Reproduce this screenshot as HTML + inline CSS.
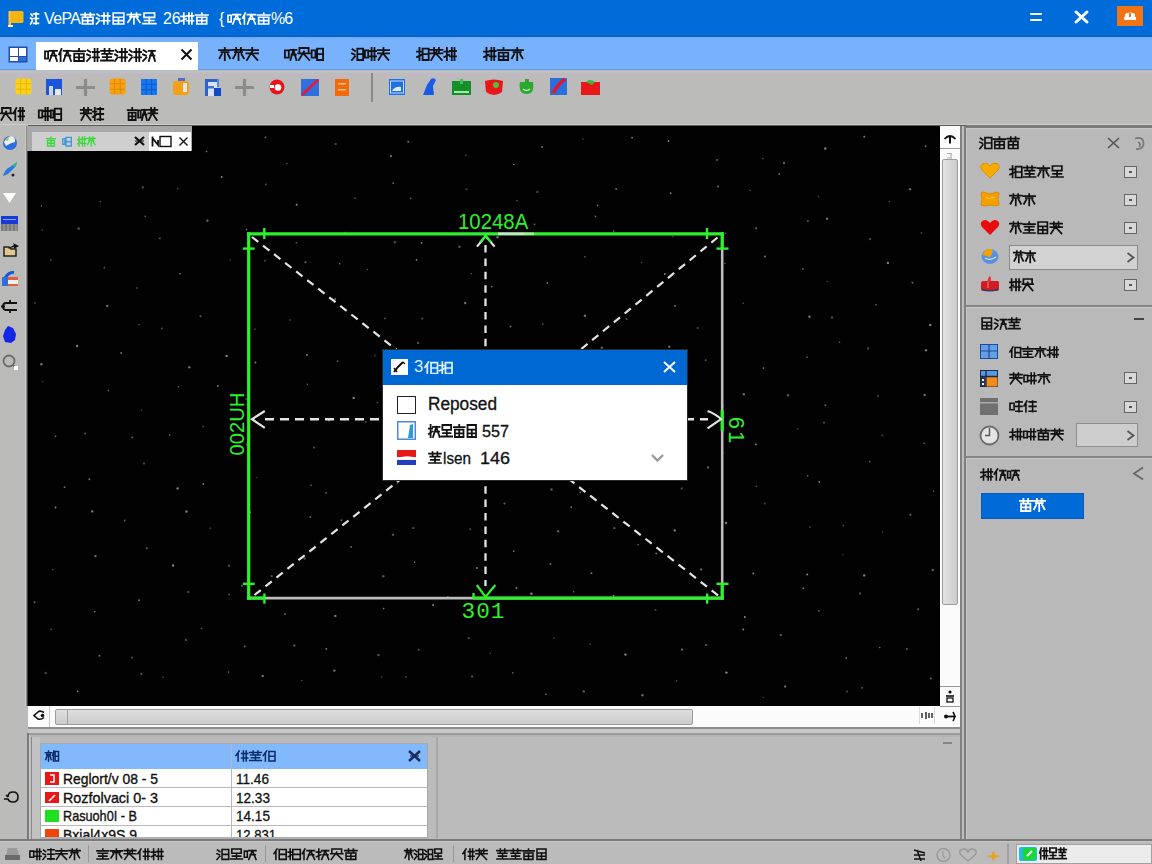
<!DOCTYPE html>
<html><head><meta charset="utf-8"><title>CAD</title>
<style>
*{margin:0;padding:0;box-sizing:border-box}
html,body{width:1152px;height:864px;overflow:hidden;background:#bbbbbb;font-family:"Liberation Sans",sans-serif}
.a{position:absolute}
.cj{display:flex;line-height:1;white-space:nowrap;font-family:"Liberation Sans",sans-serif}
.cj b{display:block;position:relative;height:100%;font-weight:inherit}
.cj i{position:absolute;left:0;right:0;top:0;text-align:center;font-style:normal}
.tx{white-space:nowrap}
</style></head><body>
<div class="a" style="left:0px;top:0px;width:1152px;height:37px;background:#006cd9"></div>
<div class="a" style="left:0px;top:35px;width:1152px;height:1px;background:#0a66c8"></div>
<div class="a" style="left:0px;top:36px;width:1152px;height:1px;background:#0a5cb8"></div>
<svg class="a" style="left:7px;top:9px;" width="18" height="20" viewBox="0 0 18 20"><rect x="1.5" y="2" width="2.5" height="16" fill="#f4c35a"/><rect x="1" y="16" width="5" height="2" fill="#fff"/><rect x="3.5" y="2" width="13" height="12" rx="1.5" fill="#f6b40c"/></svg>
<svg class="a" style="left:29.0px;top:12.0px" width="11.0" height="13.0"><path d="M2.0 2.1L3.3 3.8M1.6 6.0L3.0 7.1M1.6 12.0L3.3 8.7M4.6 1.9H9.4M4.6 6.5H9.4M4.6 11.4H9.4M7.0 1.0V12.0" stroke="#fff" stroke-width="1.65" fill="none" stroke-linecap="square"/></svg>
<div class="a tx" style="left:44px;top:10.77px;font-size:15.94px;line-height:15.94px;color:#fff;font-family:'Liberation Sans',sans-serif;letter-spacing:-0.6px">VePA</div>
<svg class="a" style="left:79.0px;top:12.0px" width="79.0" height="13.0"><path d="M2.1 2.6H15.3M6.1 1.0V4.3M11.3 1.0V4.3M3.4 5.2H14.0V12.0H3.4ZM3.4 8.6H14.0M8.7 5.2V12.0M18.1 2.1L20.3 3.8M17.5 6.0L19.9 7.1M17.5 12.0L20.3 8.7M22.5 3.8H30.7M25.0 1.0V12.0M28.7 1.0V12.0M22.5 8.7H30.7M34.2 4.3V1.0H44.8V4.3M34.2 5.2H44.8V12.0H34.2ZM34.2 8.6H44.8M39.5 5.2V12.0M48.3 2.6H61.5M52.3 1.0V4.3M57.5 1.0V4.3M54.9 4.8V12.0M51.6 6.5L48.9 10.3M58.2 6.5L60.9 10.3M50.9 4.8H58.9M65.0 4.3V1.0H75.6V4.3M65.0 5.4H75.6M65.7 8.5H74.9M63.7 11.6H76.9M70.3 5.4V11.6" stroke="#fff" stroke-width="1.65" fill="none" stroke-linecap="square"/></svg>
<div class="a tx" style="left:163px;top:10.77px;font-size:15.94px;line-height:15.94px;color:#fff;font-family:'Liberation Sans',sans-serif;">26</div>
<svg class="a" style="left:179.0px;top:12.0px" width="31.0" height="13.0"><path d="M2.0 4.3H7.0M4.8 1.0V12.0M2.0 9.2L7.0 7.1M8.0 3.8H14.5M9.9 1.0V12.0M12.9 1.0V12.0M8.0 8.7H14.5M22.8 1.0V2.6M16.5 3.0H29.0M17.8 5.2H27.7V12.0H17.8ZM17.8 8.6H27.7M22.8 5.2V12.0" stroke="#fff" stroke-width="1.65" fill="none" stroke-linecap="square"/></svg>
<div class="a tx" style="left:219px;top:10.77px;font-size:15.94px;line-height:15.94px;color:#fff;font-family:'Liberation Sans',sans-serif;">{</div>
<svg class="a" style="left:226.0px;top:12.0px" width="46.0" height="13.0"><path d="M2.0 3.2h3.2v6.6h-3.2zM6.8 2.6H14.6M10.7 2.6L6.8 12.0M10.7 2.6L14.6 12.0M8.4 7.1H13.9M19.3 1.0L16.7 6.0M18.4 3.8V12.0M21.5 2.6H29.3M25.4 2.6L21.5 12.0M25.4 2.6L29.3 12.0M23.1 7.1H28.5M37.7 1.0V2.6M31.4 3.0H44.0M32.6 5.2H42.7V12.0H32.6ZM32.6 8.6H42.7M37.7 5.2V12.0" stroke="#fff" stroke-width="1.65" fill="none" stroke-linecap="square"/></svg>
<div class="a tx" style="left:271px;top:10.77px;font-size:15.94px;line-height:15.94px;color:#fff;font-family:'Liberation Sans',sans-serif;letter-spacing:-1px">%6</div>
<div class="a" style="left:1030px;top:13px;width:12px;height:2px;background:#fff;border-radius:1px"></div>
<div class="a" style="left:1030px;top:19px;width:12px;height:2px;background:#fff;border-radius:1px"></div>
<svg class="a" style="left:1073px;top:9px;" width="17" height="16" viewBox="0 0 17 16"><path d="M3 3 L14 13 M14 3 L3 13" stroke="#fff" stroke-width="3" stroke-linecap="round"/></svg>
<div class="a" style="left:1117px;top:6px;width:26px;height:20px;background:#f27314"></div>
<svg class="a" style="left:1122px;top:10px;" width="16" height="12" viewBox="0 0 16 12"><path d="M3 4 Q8 1 13 4 L13 7 L3 7 Z" fill="#fff"/><rect x="2" y="7" width="12" height="3" fill="#fff"/><rect x="7" y="3" width="2" height="4" fill="#f27314"/></svg>
<div class="a" style="left:0px;top:37px;width:1152px;height:33px;background:#78b1fc"></div>
<div class="a" style="left:0px;top:37px;width:1152px;height:2px;background:#6eaefa"></div>
<div class="a" style="left:0px;top:69px;width:1152px;height:2px;background:#6a9ad8"></div>
<svg class="a" style="left:8px;top:46px;" width="20" height="17" viewBox="0 0 20 17"><rect x="0.5" y="0.5" width="19" height="16" fill="#1f4fa8"/><rect x="2" y="2" width="8" height="8" fill="#fff"/><rect x="11" y="2" width="7" height="8" fill="#fff"/><rect x="2" y="11" width="8" height="4" fill="#fff"/><rect x="11" y="11" width="7" height="4" fill="#2f6fd8"/></svg>
<div class="a" style="left:36px;top:42px;width:162px;height:28px;background:#fff"></div>
<svg class="a" style="left:43.0px;top:48.0px" width="114.0" height="14.0"><path d="M2.0 3.4h3.1v7.2h-3.1zM6.6 2.8H14.0M10.3 2.8L6.6 13.0M10.3 2.8L14.0 13.0M8.0 7.6H13.3M18.5 1.0L16.0 6.4M17.6 4.0V13.0M20.6 2.8H28.0M24.3 2.8L20.6 13.0M24.3 2.8L28.0 13.0M22.0 7.6H27.3M36.0 1.0V2.8M30.0 3.2H42.0M31.2 5.6H40.8V13.0H31.2ZM31.2 9.3H40.8M36.0 5.6V13.0M44.6 2.2L47.4 4.0M44.0 6.4L46.9 7.6M44.0 13.0L47.4 9.4M49.8 4.0H56.0M51.6 1.0V13.0M54.5 1.0V13.0M49.8 9.4H56.0M58.0 2.8H70.0M61.6 1.0V4.6M66.4 1.0V4.6M59.2 5.8H68.8M59.8 9.2H68.2M58.0 12.5H70.0M64.0 5.8V12.5M72.6 2.2L74.5 4.0M72.0 6.4L74.1 7.6M72.0 13.0L74.5 9.4M76.6 4.0H84.0M78.8 1.0V13.0M82.2 1.0V13.0M76.6 9.4H84.0M86.6 2.2L88.9 4.0M86.0 6.4L88.5 7.6M86.0 13.0L88.9 9.4M91.2 4.0H98.0M93.2 1.0V13.0M96.3 1.0V13.0M91.2 9.4H98.0M100.6 2.2L103.4 4.0M100.0 6.4L102.9 7.6M100.0 13.0L103.4 9.4M105.8 2.8H112.0M108.9 2.8L105.8 13.0M108.9 2.8L112.0 13.0M107.0 7.6H111.4" stroke="#111" stroke-width="1.7999999999999998" fill="none" stroke-linecap="square"/></svg>
<svg class="a" style="left:180px;top:48px;" width="13" height="13" viewBox="0 0 13 13"><path d="M1.5 1.5 L11.5 11.5 M11.5 1.5 L1.5 11.5" stroke="#111" stroke-width="2"/></svg>
<svg class="a" style="left:217.0px;top:47.0px" width="43.0" height="14.0"><path d="M7.8 1.0V2.8M2.0 3.2H13.7M7.8 5.2V13.0M4.9 7.0L2.5 11.2M10.8 7.0L13.1 11.2M4.3 5.2H11.4M15.6 2.8H27.4M19.1 1.0V4.6M23.9 1.0V4.6M21.5 5.2V13.0M18.6 7.0L16.2 11.2M24.4 7.0L26.8 11.2M18.0 5.2H25.0M35.2 1.0V2.8M29.3 3.2H41.0M29.3 6.4H41.0M35.2 4.6L29.9 13.0M35.2 7.0L40.5 13.0" stroke="#111" stroke-width="1.7999999999999998" fill="none" stroke-linecap="square"/></svg>
<svg class="a" style="left:283.0px;top:47.0px" width="42.0" height="14.0"><path d="M1.9 3.4h3.9v7.2h-3.9zM7.4 2.8H13.4M10.4 2.8L7.4 13.0M10.4 2.8L13.4 13.0M8.6 7.6H12.8M16.4 4.6V1.0H25.6V4.6M15.3 6.4H26.7M21.0 4.6L15.8 13.0M21.0 7.0L26.2 13.0M28.6 3.4h3.9v7.2h-3.9zM34.1 1.6H40.1V13.0H34.1ZM34.1 7.2H40.1" stroke="#111" stroke-width="1.7999999999999998" fill="none" stroke-linecap="square"/></svg>
<svg class="a" style="left:350.0px;top:47.0px" width="41.0" height="14.0"><path d="M2.5 2.2L5.0 4.0M1.9 6.4L4.6 7.6M1.9 13.0L5.0 9.4M7.3 1.6H13.1V13.0H7.3ZM7.3 7.2H13.1M14.9 3.4h3.3v7.2h-3.3zM19.7 4.0H26.1M21.6 1.0V13.0M24.5 1.0V13.0M19.7 9.4H26.1M33.5 1.0V2.8M27.9 3.2H39.1M27.9 6.4H39.1M33.5 4.6L28.5 13.0M33.5 7.0L38.5 13.0" stroke="#111" stroke-width="1.7999999999999998" fill="none" stroke-linecap="square"/></svg>
<svg class="a" style="left:415.0px;top:47.0px" width="43.0" height="14.0"><path d="M2.0 4.6H6.7M4.5 1.0V13.0M2.0 10.0L6.7 7.6M7.6 1.6H13.7V13.0H7.6ZM7.6 7.2H13.7M15.6 2.8H27.4M19.1 1.0V4.6M23.9 1.0V4.6M15.6 6.4H27.4M21.5 4.6L16.2 13.0M21.5 7.0L26.8 13.0M29.3 4.6H34.0M31.9 1.0V13.0M29.3 10.0L34.0 7.6M34.9 4.0H41.0M36.8 1.0V13.0M39.5 1.0V13.0M34.9 9.4H41.0" stroke="#111" stroke-width="1.7999999999999998" fill="none" stroke-linecap="square"/></svg>
<svg class="a" style="left:482.0px;top:47.0px" width="43.0" height="14.0"><path d="M2.0 4.6H6.7M4.5 1.0V13.0M2.0 10.0L6.7 7.6M7.6 4.0H13.7M9.4 1.0V13.0M12.2 1.0V13.0M7.6 9.4H13.7M21.5 1.0V2.8M15.6 3.2H27.4M16.8 5.6H26.2V13.0H16.8ZM16.8 9.3H26.2M21.5 5.6V13.0M35.2 1.0V2.8M29.3 3.2H41.0M35.2 5.2V13.0M32.2 7.0L29.9 11.2M38.1 7.0L40.5 11.2M31.6 5.2H38.7" stroke="#111" stroke-width="1.7999999999999998" fill="none" stroke-linecap="square"/></svg>
<div class="a" style="left:0px;top:70px;width:1152px;height:56px;background:#bbbbba"></div>
<div class="a" style="left:0px;top:71px;width:1152px;height:2px;background:#b6c4c8"></div>
<div class="a" style="left:0px;top:73px;width:1152px;height:4px;background:#c1b9bf"></div>
<div class="a" style="left:0px;top:124px;width:1152px;height:1px;background:#cdcdcd"></div>
<div class="a" style="left:28px;top:125px;width:938px;height:1px;background:#5a5a5a"></div>
<div class="a" style="left:371px;top:73px;width:2px;height:29px;background:#8a8a8a"></div>
<svg class="a" style="left:15px;top:78px;" width="17" height="17" viewBox="0 0 17 17"><rect x="0.5" y="0.5" width="16" height="16" rx="3" fill="#f8d21c"/><line x1="5.7" y1="1" x2="5.7" y2="16" stroke="#e8b800" stroke-width="1"/><line x1="11.3" y1="1" x2="11.3" y2="16" stroke="#e8b800" stroke-width="1"/><line x1="1" y1="5.7" x2="16" y2="5.7" stroke="#e8b800" stroke-width="1"/><line x1="1" y1="11.3" x2="16" y2="11.3" stroke="#e8b800" stroke-width="1"/></svg>
<svg class="a" style="left:46px;top:79px;" width="16" height="16" viewBox="0 0 16 16"><rect x="0" y="0" width="16" height="16" fill="#1a55e0"/><rect x="3" y="7" width="4" height="9" fill="#c8d4f0"/><rect x="9" y="10" width="6" height="6" fill="#e8e8e8"/></svg>
<svg class="a" style="left:76px;top:79px;" width="19" height="17" viewBox="0 0 19 17"><path d="M9.5 1 V16 M1 8.5 H18" stroke="#8c8c8c" stroke-width="3.2" stroke-linecap="round"/></svg>
<svg class="a" style="left:109px;top:78px;" width="17" height="17" viewBox="0 0 17 17"><rect x="0.5" y="0.5" width="16" height="16" rx="3" fill="#f7a10c"/><line x1="5.7" y1="1" x2="5.7" y2="16" stroke="#e08a00" stroke-width="1"/><line x1="11.3" y1="1" x2="11.3" y2="16" stroke="#e08a00" stroke-width="1"/><line x1="1" y1="5.7" x2="16" y2="5.7" stroke="#e08a00" stroke-width="1"/><line x1="1" y1="11.3" x2="16" y2="11.3" stroke="#e08a00" stroke-width="1"/></svg>
<svg class="a" style="left:141px;top:79px;" width="16" height="16" viewBox="0 0 16 16"><rect x="0" y="0" width="16" height="16" fill="#1677f0"/><path d="M5.3 0 V16 M10.6 0 V16 M0 5.3 H16 M0 10.6 H16" stroke="#0d5cc8" stroke-width="1"/></svg>
<svg class="a" style="left:173px;top:78px;" width="16" height="17" viewBox="0 0 16 17"><rect x="5" y="0" width="7" height="3" fill="#4a6fd0"/><rect x="0" y="3" width="16" height="14" rx="3" fill="#f5a014"/><rect x="10" y="5" width="4" height="9" fill="#e6e6e6"/></svg>
<svg class="a" style="left:205px;top:79px;" width="16" height="17" viewBox="0 0 16 17"><rect x="0" y="0" width="3" height="17" fill="#2a62d0"/><rect x="0" y="0" width="12" height="3" fill="#2a62d0"/><rect x="3" y="3" width="9" height="14" fill="#d8e2f4"/><rect x="3" y="7" width="6" height="2.5" fill="#3a72e0"/><rect x="12" y="0" width="2" height="8" fill="#5a8ae8"/><rect x="9" y="9" width="7" height="8" fill="#1448c8"/></svg>
<svg class="a" style="left:235px;top:79px;" width="19" height="17" viewBox="0 0 19 17"><path d="M9.5 1 V16 M1 8.5 H18" stroke="#8c8c8c" stroke-width="3.2" stroke-linecap="round"/></svg>
<svg class="a" style="left:268px;top:79px;" width="18" height="16" viewBox="0 0 18 16"><circle cx="9" cy="8" r="7.5" fill="#e8141a"/><circle cx="10" cy="8.5" r="3.3" fill="#fff"/><rect x="2" y="6" width="4" height="3" fill="#fff"/></svg>
<svg class="a" style="left:301px;top:79px;" width="18" height="17" viewBox="0 0 18 17"><rect x="0" y="0" width="18" height="17" fill="#2f6fe0"/><path d="M1 16 L17 1" stroke="#d8203a" stroke-width="3"/></svg>
<svg class="a" style="left:335px;top:79px;" width="14" height="17" viewBox="0 0 14 17"><rect x="0" y="0" width="14" height="17" fill="#f26a0a"/><rect x="3" y="4" width="8" height="1.5" fill="#f8c090"/><rect x="3" y="10" width="8" height="1.5" fill="#f8c090"/></svg>
<svg class="a" style="left:389px;top:79px;" width="16" height="16" viewBox="0 0 16 16"><rect x="0" y="0" width="16" height="16" fill="#1f6fe8"/><rect x="1.5" y="2" width="13" height="12" fill="none" stroke="#c8dcf8" stroke-width="1"/><path d="M3 12 Q6 7 12 8 V12 Z" fill="#e0ecff"/></svg>
<svg class="a" style="left:422px;top:77px;" width="15" height="18" viewBox="0 0 15 18"><path d="M1 18 L5 8 L9 2 Q12 0 14 3 L11 9 L12 18 Z" fill="#1a5ae8"/></svg>
<svg class="a" style="left:452px;top:79px;" width="19" height="16" viewBox="0 0 19 16"><rect x="0" y="2" width="19" height="14" fill="#13902a"/><rect x="2" y="12" width="15" height="2" fill="#a8e8a8"/><rect x="8" y="0" width="3" height="5" fill="#40c050"/></svg>
<svg class="a" style="left:485px;top:79px;" width="18" height="17" viewBox="0 0 18 17"><path d="M0 2 Q9 -1 18 2 L17 13 Q9 19 1 13 Z" fill="#e81818"/><circle cx="11" cy="6" r="3" fill="#50c040"/></svg>
<svg class="a" style="left:518px;top:78px;" width="17" height="17" viewBox="0 0 17 17"><path d="M2 4 Q0 16 8.5 16 Q17 16 15 4 L11 4 L11 1 L7 1 L7 4 Z" fill="#2aa830"/><path d="M5 11 Q8.5 14 12 11" stroke="#b8f0b8" stroke-width="1.6" fill="none"/></svg>
<svg class="a" style="left:550px;top:78px;" width="17" height="17" viewBox="0 0 17 17"><rect x="0" y="0" width="17" height="17" fill="#2a6fe0"/><path d="M3 15 Q8 6 15 1" stroke="#e01a2a" stroke-width="3.5" fill="none"/></svg>
<svg class="a" style="left:581px;top:79px;" width="19" height="16" viewBox="0 0 19 16"><rect x="0" y="3" width="19" height="13" fill="#e81818"/><path d="M5 3 Q9 -1 14 3 L11 6 Z" fill="#3ab83a"/></svg>
<svg class="a" style="left:-1.0px;top:107.0px" width="27.0" height="14.0"><path d="M3.0 4.6V1.0H11.6V4.6M1.9 6.4H12.6M7.2 4.6L2.4 13.0M7.2 7.0L12.1 13.0M17.4 1.0L14.4 6.4M16.3 4.0V13.0M19.5 4.0H25.1M21.2 1.0V13.0M23.7 1.0V13.0M19.5 9.4H25.1" stroke="#111" stroke-width="1.7999999999999998" fill="none" stroke-linecap="square"/></svg>
<svg class="a" style="left:37.0px;top:107.0px" width="26.0" height="14.0"><path d="M1.8 3.4h3.5v7.2h-3.5zM6.8 4.0H12.2M8.4 1.0V13.0M10.8 1.0V13.0M6.8 9.4H12.2M13.8 3.4h2.6v7.2h-2.6zM17.8 1.6H24.2V13.0H17.8ZM17.8 7.2H24.2" stroke="#111" stroke-width="1.7999999999999998" fill="none" stroke-linecap="square"/></svg>
<svg class="a" style="left:79.0px;top:107.0px" width="26.0" height="14.0"><path d="M1.8 2.8H12.2M4.9 1.0V4.6M9.1 1.0V4.6M1.8 6.4H12.2M7.0 4.6L2.4 13.0M7.0 7.0L11.6 13.0M13.8 4.6H17.5M15.8 1.0V13.0M13.8 10.0L17.5 7.6M18.3 2.0H24.2M18.3 7.0H24.2M18.3 12.4H24.2M21.2 1.0V13.0" stroke="#111" stroke-width="1.7999999999999998" fill="none" stroke-linecap="square"/></svg>
<svg class="a" style="left:126.0px;top:107.0px" width="33.0" height="14.0"><path d="M6.2 1.0V2.8M1.7 3.2H10.6M2.6 5.6H9.7V13.0H2.6ZM2.6 9.3H9.7M6.2 5.6V13.0M12.1 3.4h2.6v7.2h-2.6zM15.9 2.8H20.9M18.4 2.8L15.9 13.0M18.4 2.8L20.9 13.0M16.9 7.6H20.4M22.4 2.8H31.3M25.1 1.0V4.6M28.6 1.0V4.6M22.4 6.4H31.3M26.8 4.6L22.8 13.0M26.8 7.0L30.8 13.0" stroke="#111" stroke-width="1.7999999999999998" fill="none" stroke-linecap="square"/></svg>
<div class="a" style="left:0px;top:126px;width:27px;height:714px;background:#bbbbba"></div>
<div class="a" style="left:25px;top:126px;width:1px;height:580px;background:#cacaca"></div>
<div class="a" style="left:26px;top:126px;width:1px;height:580px;background:#8a8a8a"></div>
<div class="a" style="left:27px;top:126px;width:1px;height:580px;background:#3a3a3a"></div>
<svg class="a" style="left:3px;top:135px;" width="14" height="16" viewBox="0 0 14 16"><circle cx="7" cy="8" r="7" fill="#2a6ee0"/><path d="M1 7 Q4 1 9 1 Q13 3 12 7 Q7 8 3 11 Z" fill="#f0f0f0"/><path d="M2 5 L6 2 L5 6 Z" fill="#8cc850"/></svg>
<svg class="a" style="left:2px;top:161px;" width="16" height="16" viewBox="0 0 16 16"><path d="M1 15 Q3 8 8 6 L15 1 L14 5 L9 10 Q6 14 1 15 Z" fill="#2a78e0"/><path d="M10 4 L15 1 L13 6 Z" fill="#30c090"/><circle cx="11" cy="14" r="1.5" fill="#222"/></svg>
<svg class="a" style="left:3px;top:193px;" width="13" height="10" viewBox="0 0 13 10"><path d="M0 0 H13 L6.5 10 Z" fill="#fff"/></svg>
<svg class="a" style="left:1px;top:216px;" width="17" height="15" viewBox="0 0 17 15"><rect x="0" y="0" width="17" height="8" fill="#1838d8"/><rect x="2" y="3" width="13" height="1" fill="#8aa8f0"/><rect x="0" y="8" width="17" height="7" fill="#7a7a7a"/><path d="M3 8 V15 M7 8 V15 M11 8 V15 M15 8 V15" stroke="#a8a8a8" stroke-width="1"/></svg>
<svg class="a" style="left:3px;top:243px;" width="16" height="14" viewBox="0 0 16 14"><path d="M1 4 H6 L8 6 H13 V13 H1 Z" fill="#e0c890" stroke="#222" stroke-width="1.5"/><path d="M4 6 L11 2 L10 0 L16 3 L11 6 L11 4 Z" fill="#111"/></svg>
<svg class="a" style="left:2px;top:271px;" width="16" height="15" viewBox="0 0 16 15"><rect x="0" y="6" width="16" height="9" fill="#e06040"/><rect x="0" y="9" width="16" height="4" fill="#f0f0f0"/><path d="M2 10 Q4 2 12 1" stroke="#1a58d8" stroke-width="3" fill="none"/><rect x="0" y="6" width="6" height="9" fill="#2a6ee0"/></svg>
<svg class="a" style="left:1px;top:300px;" width="17" height="13" viewBox="0 0 17 13"><path d="M16 3 H5 Q2 3 2 6.5 Q2 10 5 10 H16" stroke="#111" stroke-width="1.8" fill="none"/><path d="M0 6.5 H4 M9 0 V3 M9 10 V13" stroke="#111" stroke-width="1.8"/></svg>
<svg class="a" style="left:3px;top:325px;" width="14" height="19" viewBox="0 0 14 19"><path d="M5 1 L10 3 L13 9 L12 15 L8 18 L2 17 L0 11 L2 5 Z" fill="#1426e8"/></svg>
<svg class="a" style="left:2px;top:354px;" width="16" height="16" viewBox="0 0 16 16"><circle cx="7" cy="7" r="5.5" stroke="#6c6c6c" stroke-width="1.8" fill="none"/><path d="M11 11 L14 14" stroke="#6c6c6c" stroke-width="2"/><rect x="12" y="12" width="4" height="4" fill="#fff"/></svg>
<svg class="a" style="left:4px;top:791px;" width="16" height="12" viewBox="0 0 16 12"><path d="M4 6 Q4 1 9 1 Q14 1 14 6 Q14 11 9 11 Q5 11 4 8 L0 8 M2 4 L4 6" stroke="#111" stroke-width="1.6" fill="none"/></svg>
<div class="a" style="left:28px;top:126px;width:912px;height:580px;background:#020202"></div>
<svg class="a" style="left:28px;top:126px;" width="912" height="580" viewBox="0 0 912 580"><circle cx="27.2" cy="6.9" r="0.9" fill="rgba(210,210,210,0.40)"/><circle cx="52.0" cy="9.5" r="0.8" fill="rgba(210,210,210,0.56)"/><circle cx="108.2" cy="7.2" r="0.9" fill="rgba(210,210,210,0.33)"/><circle cx="146.6" cy="7.0" r="1.2" fill="rgba(210,210,210,0.37)"/><circle cx="178.5" cy="25.5" r="0.8" fill="rgba(210,210,210,0.58)"/><circle cx="237.5" cy="11.4" r="1.0" fill="rgba(210,210,210,0.45)"/><circle cx="258.9" cy="37.6" r="0.8" fill="rgba(210,210,210,0.42)"/><circle cx="307.6" cy="17.9" r="1.0" fill="rgba(210,210,210,0.42)"/><circle cx="363.0" cy="30.1" r="1.2" fill="rgba(210,210,210,0.49)"/><circle cx="380.2" cy="15.8" r="1.0" fill="rgba(210,210,210,0.52)"/><circle cx="437.9" cy="29.3" r="0.9" fill="rgba(210,210,210,0.32)"/><circle cx="485.7" cy="38.5" r="0.8" fill="rgba(210,210,210,0.60)"/><circle cx="514.0" cy="21.0" r="0.9" fill="rgba(210,210,210,0.59)"/><circle cx="554.9" cy="13.0" r="0.8" fill="rgba(210,210,210,0.39)"/><circle cx="604.1" cy="11.7" r="0.9" fill="rgba(210,210,210,0.56)"/><circle cx="640.5" cy="15.0" r="0.9" fill="rgba(210,210,210,0.62)"/><circle cx="689.1" cy="33.9" r="0.9" fill="rgba(210,210,210,0.57)"/><circle cx="734.9" cy="32.6" r="0.8" fill="rgba(210,210,210,0.44)"/><circle cx="756.0" cy="37.1" r="1.0" fill="rgba(210,210,210,0.61)"/><circle cx="797.3" cy="22.5" r="1.2" fill="rgba(210,210,210,0.61)"/><circle cx="836.3" cy="10.7" r="1.0" fill="rgba(210,210,210,0.56)"/><circle cx="897.5" cy="20.2" r="1.0" fill="rgba(210,210,210,0.50)"/><circle cx="13.4" cy="80.1" r="0.8" fill="rgba(210,210,210,0.48)"/><circle cx="72.4" cy="75.6" r="0.9" fill="rgba(210,210,210,0.35)"/><circle cx="114.8" cy="61.2" r="1.2" fill="rgba(210,210,210,0.32)"/><circle cx="149.6" cy="62.7" r="0.8" fill="rgba(210,210,210,0.39)"/><circle cx="193.7" cy="51.0" r="1.0" fill="rgba(210,210,210,0.61)"/><circle cx="237.9" cy="58.5" r="0.9" fill="rgba(210,210,210,0.40)"/><circle cx="268.7" cy="78.7" r="1.0" fill="rgba(210,210,210,0.61)"/><circle cx="327.1" cy="72.3" r="0.8" fill="rgba(210,210,210,0.48)"/><circle cx="365.1" cy="57.1" r="0.9" fill="rgba(210,210,210,0.52)"/><circle cx="382.6" cy="72.4" r="0.8" fill="rgba(210,210,210,0.49)"/><circle cx="438.6" cy="63.3" r="1.0" fill="rgba(210,210,210,0.34)"/><circle cx="489.1" cy="74.6" r="0.8" fill="rgba(210,210,210,0.41)"/><circle cx="509.4" cy="65.9" r="1.2" fill="rgba(210,210,210,0.33)"/><circle cx="569.6" cy="79.4" r="0.9" fill="rgba(210,210,210,0.49)"/><circle cx="588.2" cy="62.9" r="1.0" fill="rgba(210,210,210,0.49)"/><circle cx="642.6" cy="67.2" r="0.9" fill="rgba(210,210,210,0.64)"/><circle cx="690.0" cy="60.4" r="1.0" fill="rgba(210,210,210,0.54)"/><circle cx="722.2" cy="64.3" r="0.9" fill="rgba(210,210,210,0.34)"/><circle cx="751.2" cy="47.9" r="0.9" fill="rgba(210,210,210,0.49)"/><circle cx="790.5" cy="70.6" r="0.8" fill="rgba(210,210,210,0.32)"/><circle cx="861.5" cy="75.6" r="0.9" fill="rgba(210,210,210,0.32)"/><circle cx="882.0" cy="63.2" r="1.2" fill="rgba(210,210,210,0.49)"/><circle cx="14.2" cy="104.0" r="0.8" fill="rgba(210,210,210,0.44)"/><circle cx="50.6" cy="102.6" r="1.2" fill="rgba(210,210,210,0.45)"/><circle cx="117.2" cy="90.2" r="0.8" fill="rgba(210,210,210,0.53)"/><circle cx="131.9" cy="112.4" r="0.8" fill="rgba(210,210,210,0.58)"/><circle cx="179.4" cy="94.7" r="1.2" fill="rgba(210,210,210,0.46)"/><circle cx="218.5" cy="103.6" r="0.8" fill="rgba(210,210,210,0.61)"/><circle cx="268.4" cy="116.8" r="0.8" fill="rgba(210,210,210,0.49)"/><circle cx="316.6" cy="106.2" r="0.8" fill="rgba(210,210,210,0.31)"/><circle cx="366.9" cy="116.3" r="1.2" fill="rgba(210,210,210,0.36)"/><circle cx="393.5" cy="116.9" r="0.9" fill="rgba(210,210,210,0.62)"/><circle cx="431.4" cy="120.8" r="1.2" fill="rgba(210,210,210,0.39)"/><circle cx="469.5" cy="111.3" r="1.2" fill="rgba(210,210,210,0.56)"/><circle cx="506.5" cy="98.2" r="0.8" fill="rgba(210,210,210,0.64)"/><circle cx="567.4" cy="90.3" r="0.9" fill="rgba(210,210,210,0.50)"/><circle cx="585.8" cy="105.1" r="0.8" fill="rgba(210,210,210,0.60)"/><circle cx="644.9" cy="110.6" r="0.8" fill="rgba(210,210,210,0.38)"/><circle cx="697.6" cy="107.2" r="0.8" fill="rgba(210,210,210,0.50)"/><circle cx="728.2" cy="102.2" r="1.0" fill="rgba(210,210,210,0.50)"/><circle cx="779.9" cy="95.1" r="0.9" fill="rgba(210,210,210,0.55)"/><circle cx="799.1" cy="92.7" r="1.2" fill="rgba(210,210,210,0.53)"/><circle cx="842.0" cy="113.1" r="1.2" fill="rgba(210,210,210,0.33)"/><circle cx="893.4" cy="106.9" r="0.9" fill="rgba(210,210,210,0.33)"/><circle cx="22.8" cy="133.9" r="0.8" fill="rgba(210,210,210,0.42)"/><circle cx="76.4" cy="141.7" r="1.0" fill="rgba(210,210,210,0.36)"/><circle cx="108.9" cy="162.0" r="0.8" fill="rgba(210,210,210,0.53)"/><circle cx="152.0" cy="147.8" r="0.8" fill="rgba(210,210,210,0.63)"/><circle cx="202.2" cy="134.0" r="0.8" fill="rgba(210,210,210,0.34)"/><circle cx="237.0" cy="134.7" r="0.9" fill="rgba(210,210,210,0.40)"/><circle cx="277.5" cy="136.2" r="1.0" fill="rgba(210,210,210,0.52)"/><circle cx="311.7" cy="137.8" r="0.8" fill="rgba(210,210,210,0.62)"/><circle cx="339.4" cy="143.5" r="0.8" fill="rgba(210,210,210,0.40)"/><circle cx="388.6" cy="133.8" r="0.9" fill="rgba(210,210,210,0.64)"/><circle cx="443.3" cy="147.7" r="0.8" fill="rgba(210,210,210,0.45)"/><circle cx="463.8" cy="160.6" r="0.9" fill="rgba(210,210,210,0.54)"/><circle cx="519.4" cy="157.0" r="0.9" fill="rgba(210,210,210,0.50)"/><circle cx="556.9" cy="130.9" r="0.8" fill="rgba(210,210,210,0.43)"/><circle cx="613.6" cy="136.5" r="0.8" fill="rgba(210,210,210,0.39)"/><circle cx="636.9" cy="148.0" r="0.9" fill="rgba(210,210,210,0.61)"/><circle cx="697.1" cy="137.3" r="0.9" fill="rgba(210,210,210,0.36)"/><circle cx="736.9" cy="130.4" r="1.0" fill="rgba(210,210,210,0.56)"/><circle cx="774.9" cy="143.1" r="0.9" fill="rgba(210,210,210,0.53)"/><circle cx="799.1" cy="155.5" r="0.8" fill="rgba(210,210,210,0.34)"/><circle cx="859.9" cy="136.9" r="1.2" fill="rgba(210,210,210,0.59)"/><circle cx="884.4" cy="156.6" r="0.9" fill="rgba(210,210,210,0.60)"/><circle cx="6.9" cy="177.0" r="0.8" fill="rgba(210,210,210,0.41)"/><circle cx="79.3" cy="179.9" r="1.2" fill="rgba(210,210,210,0.52)"/><circle cx="111.1" cy="198.5" r="0.8" fill="rgba(210,210,210,0.42)"/><circle cx="133.8" cy="202.6" r="1.0" fill="rgba(210,210,210,0.36)"/><circle cx="172.5" cy="190.3" r="1.0" fill="rgba(210,210,210,0.42)"/><circle cx="226.9" cy="203.1" r="0.9" fill="rgba(210,210,210,0.34)"/><circle cx="262.2" cy="194.0" r="0.9" fill="rgba(210,210,210,0.30)"/><circle cx="307.1" cy="173.0" r="1.0" fill="rgba(210,210,210,0.53)"/><circle cx="356.9" cy="192.5" r="1.0" fill="rgba(210,210,210,0.34)"/><circle cx="394.3" cy="192.6" r="1.0" fill="rgba(210,210,210,0.41)"/><circle cx="437.2" cy="177.0" r="1.2" fill="rgba(210,210,210,0.53)"/><circle cx="482.5" cy="200.4" r="1.0" fill="rgba(210,210,210,0.52)"/><circle cx="514.8" cy="198.1" r="0.9" fill="rgba(210,210,210,0.41)"/><circle cx="556.9" cy="189.8" r="1.2" fill="rgba(210,210,210,0.53)"/><circle cx="598.5" cy="192.9" r="0.9" fill="rgba(210,210,210,0.48)"/><circle cx="647.0" cy="180.0" r="1.0" fill="rgba(210,210,210,0.53)"/><circle cx="669.6" cy="202.0" r="1.0" fill="rgba(210,210,210,0.38)"/><circle cx="715.2" cy="177.2" r="0.9" fill="rgba(210,210,210,0.31)"/><circle cx="781.5" cy="190.8" r="1.2" fill="rgba(210,210,210,0.57)"/><circle cx="804.0" cy="191.4" r="1.2" fill="rgba(210,210,210,0.37)"/><circle cx="847.9" cy="178.7" r="0.8" fill="rgba(210,210,210,0.53)"/><circle cx="902.3" cy="199.0" r="1.2" fill="rgba(210,210,210,0.61)"/><circle cx="13.4" cy="238.3" r="1.2" fill="rgba(210,210,210,0.54)"/><circle cx="49.1" cy="220.0" r="1.2" fill="rgba(210,210,210,0.60)"/><circle cx="93.1" cy="227.1" r="1.0" fill="rgba(210,210,210,0.49)"/><circle cx="161.3" cy="241.2" r="1.2" fill="rgba(210,210,210,0.51)"/><circle cx="198.6" cy="229.9" r="1.2" fill="rgba(210,210,210,0.61)"/><circle cx="227.4" cy="236.6" r="1.0" fill="rgba(210,210,210,0.59)"/><circle cx="279.0" cy="229.0" r="1.0" fill="rgba(210,210,210,0.52)"/><circle cx="309.6" cy="235.3" r="1.0" fill="rgba(210,210,210,0.38)"/><circle cx="346.9" cy="229.6" r="0.9" fill="rgba(210,210,210,0.35)"/><circle cx="390.2" cy="216.9" r="1.2" fill="rgba(210,210,210,0.37)"/><circle cx="432.3" cy="229.7" r="0.9" fill="rgba(210,210,210,0.45)"/><circle cx="487.6" cy="224.6" r="0.8" fill="rgba(210,210,210,0.57)"/><circle cx="529.7" cy="237.0" r="0.8" fill="rgba(210,210,210,0.43)"/><circle cx="573.8" cy="221.7" r="1.2" fill="rgba(210,210,210,0.44)"/><circle cx="601.7" cy="236.0" r="0.9" fill="rgba(210,210,210,0.58)"/><circle cx="641.3" cy="220.8" r="1.2" fill="rgba(210,210,210,0.47)"/><circle cx="677.6" cy="234.2" r="0.9" fill="rgba(210,210,210,0.44)"/><circle cx="735.5" cy="242.1" r="0.8" fill="rgba(210,210,210,0.64)"/><circle cx="779.0" cy="231.3" r="0.8" fill="rgba(210,210,210,0.53)"/><circle cx="811.5" cy="216.3" r="0.8" fill="rgba(210,210,210,0.46)"/><circle cx="840.2" cy="222.6" r="1.0" fill="rgba(210,210,210,0.46)"/><circle cx="898.0" cy="224.3" r="1.2" fill="rgba(210,210,210,0.56)"/><circle cx="14.5" cy="255.7" r="0.8" fill="rgba(210,210,210,0.31)"/><circle cx="80.4" cy="264.5" r="0.8" fill="rgba(210,210,210,0.53)"/><circle cx="113.6" cy="284.2" r="0.8" fill="rgba(210,210,210,0.37)"/><circle cx="150.5" cy="260.8" r="0.8" fill="rgba(210,210,210,0.47)"/><circle cx="189.8" cy="260.1" r="1.0" fill="rgba(210,210,210,0.54)"/><circle cx="218.0" cy="273.0" r="0.8" fill="rgba(210,210,210,0.56)"/><circle cx="279.4" cy="258.4" r="0.8" fill="rgba(210,210,210,0.41)"/><circle cx="325.7" cy="271.9" r="1.2" fill="rgba(210,210,210,0.62)"/><circle cx="349.4" cy="276.5" r="0.9" fill="rgba(210,210,210,0.33)"/><circle cx="380.9" cy="278.4" r="0.8" fill="rgba(210,210,210,0.60)"/><circle cx="445.1" cy="271.6" r="1.2" fill="rgba(210,210,210,0.31)"/><circle cx="482.0" cy="255.2" r="0.8" fill="rgba(210,210,210,0.53)"/><circle cx="529.5" cy="280.0" r="1.0" fill="rgba(210,210,210,0.34)"/><circle cx="563.7" cy="280.2" r="1.2" fill="rgba(210,210,210,0.55)"/><circle cx="589.8" cy="270.1" r="1.2" fill="rgba(210,210,210,0.53)"/><circle cx="640.6" cy="280.1" r="1.0" fill="rgba(210,210,210,0.51)"/><circle cx="694.6" cy="280.3" r="1.2" fill="rgba(210,210,210,0.33)"/><circle cx="715.8" cy="268.3" r="1.2" fill="rgba(210,210,210,0.51)"/><circle cx="760.1" cy="269.2" r="1.2" fill="rgba(210,210,210,0.41)"/><circle cx="797.3" cy="279.2" r="1.0" fill="rgba(210,210,210,0.42)"/><circle cx="849.9" cy="270.0" r="0.9" fill="rgba(210,210,210,0.37)"/><circle cx="896.6" cy="269.1" r="1.2" fill="rgba(210,210,210,0.57)"/><circle cx="27.5" cy="310.3" r="0.8" fill="rgba(210,210,210,0.58)"/><circle cx="57.1" cy="307.4" r="1.0" fill="rgba(210,210,210,0.39)"/><circle cx="104.3" cy="311.6" r="1.0" fill="rgba(210,210,210,0.45)"/><circle cx="141.6" cy="309.0" r="0.9" fill="rgba(210,210,210,0.41)"/><circle cx="175.2" cy="300.5" r="0.9" fill="rgba(210,210,210,0.34)"/><circle cx="218.8" cy="318.4" r="1.0" fill="rgba(210,210,210,0.40)"/><circle cx="286.1" cy="321.5" r="1.0" fill="rgba(210,210,210,0.40)"/><circle cx="301.0" cy="294.6" r="1.0" fill="rgba(210,210,210,0.49)"/><circle cx="337.8" cy="295.9" r="0.9" fill="rgba(210,210,210,0.40)"/><circle cx="398.6" cy="318.9" r="0.8" fill="rgba(210,210,210,0.34)"/><circle cx="437.8" cy="309.6" r="0.9" fill="rgba(210,210,210,0.45)"/><circle cx="492.0" cy="302.4" r="0.8" fill="rgba(210,210,210,0.60)"/><circle cx="528.5" cy="307.3" r="0.8" fill="rgba(210,210,210,0.33)"/><circle cx="547.7" cy="320.8" r="0.8" fill="rgba(210,210,210,0.63)"/><circle cx="616.8" cy="298.0" r="0.9" fill="rgba(210,210,210,0.57)"/><circle cx="650.8" cy="306.6" r="1.0" fill="rgba(210,210,210,0.62)"/><circle cx="694.9" cy="326.7" r="0.8" fill="rgba(210,210,210,0.41)"/><circle cx="727.9" cy="318.5" r="0.9" fill="rgba(210,210,210,0.63)"/><circle cx="769.7" cy="302.8" r="0.9" fill="rgba(210,210,210,0.33)"/><circle cx="796.0" cy="296.6" r="1.2" fill="rgba(210,210,210,0.30)"/><circle cx="854.3" cy="309.6" r="1.0" fill="rgba(210,210,210,0.31)"/><circle cx="896.2" cy="317.3" r="0.9" fill="rgba(210,210,210,0.46)"/><circle cx="36.6" cy="361.2" r="0.9" fill="rgba(210,210,210,0.52)"/><circle cx="61.4" cy="353.2" r="1.0" fill="rgba(210,210,210,0.53)"/><circle cx="116.0" cy="337.6" r="1.0" fill="rgba(210,210,210,0.36)"/><circle cx="149.6" cy="362.4" r="1.2" fill="rgba(210,210,210,0.62)"/><circle cx="175.3" cy="357.9" r="1.0" fill="rgba(210,210,210,0.54)"/><circle cx="229.0" cy="351.5" r="0.8" fill="rgba(210,210,210,0.33)"/><circle cx="283.1" cy="359.4" r="0.8" fill="rgba(210,210,210,0.51)"/><circle cx="298.1" cy="366.9" r="0.8" fill="rgba(210,210,210,0.59)"/><circle cx="369.3" cy="357.4" r="0.8" fill="rgba(210,210,210,0.39)"/><circle cx="402.8" cy="341.0" r="1.2" fill="rgba(210,210,210,0.48)"/><circle cx="449.1" cy="341.2" r="1.2" fill="rgba(210,210,210,0.50)"/><circle cx="492.1" cy="350.7" r="1.0" fill="rgba(210,210,210,0.44)"/><circle cx="523.5" cy="363.5" r="1.2" fill="rgba(210,210,210,0.42)"/><circle cx="552.2" cy="366.4" r="0.8" fill="rgba(210,210,210,0.58)"/><circle cx="599.0" cy="345.6" r="1.2" fill="rgba(210,210,210,0.41)"/><circle cx="653.8" cy="362.4" r="1.2" fill="rgba(210,210,210,0.30)"/><circle cx="680.1" cy="341.4" r="1.2" fill="rgba(210,210,210,0.43)"/><circle cx="728.4" cy="360.3" r="0.9" fill="rgba(210,210,210,0.37)"/><circle cx="779.7" cy="349.7" r="0.8" fill="rgba(210,210,210,0.54)"/><circle cx="791.3" cy="356.0" r="0.9" fill="rgba(210,210,210,0.58)"/><circle cx="841.8" cy="335.7" r="0.9" fill="rgba(210,210,210,0.44)"/><circle cx="905.6" cy="365.3" r="0.8" fill="rgba(210,210,210,0.46)"/><circle cx="27.5" cy="381.5" r="1.0" fill="rgba(210,210,210,0.63)"/><circle cx="64.2" cy="385.4" r="1.2" fill="rgba(210,210,210,0.59)"/><circle cx="96.7" cy="394.5" r="0.9" fill="rgba(210,210,210,0.43)"/><circle cx="158.5" cy="385.5" r="1.2" fill="rgba(210,210,210,0.58)"/><circle cx="182.4" cy="402.3" r="0.8" fill="rgba(210,210,210,0.39)"/><circle cx="221.8" cy="386.2" r="1.2" fill="rgba(210,210,210,0.51)"/><circle cx="282.3" cy="391.1" r="1.0" fill="rgba(210,210,210,0.47)"/><circle cx="313.3" cy="394.3" r="1.0" fill="rgba(210,210,210,0.46)"/><circle cx="365.0" cy="408.7" r="1.2" fill="rgba(210,210,210,0.38)"/><circle cx="385.3" cy="401.9" r="1.2" fill="rgba(210,210,210,0.32)"/><circle cx="442.1" cy="403.1" r="0.9" fill="rgba(210,210,210,0.44)"/><circle cx="476.5" cy="377.6" r="1.0" fill="rgba(210,210,210,0.48)"/><circle cx="530.1" cy="405.2" r="1.2" fill="rgba(210,210,210,0.45)"/><circle cx="543.2" cy="381.1" r="0.9" fill="rgba(210,210,210,0.60)"/><circle cx="586.4" cy="402.1" r="1.2" fill="rgba(210,210,210,0.39)"/><circle cx="646.7" cy="404.4" r="1.2" fill="rgba(210,210,210,0.60)"/><circle cx="698.0" cy="397.0" r="1.2" fill="rgba(210,210,210,0.61)"/><circle cx="736.6" cy="377.6" r="1.0" fill="rgba(210,210,210,0.32)"/><circle cx="782.0" cy="401.0" r="0.8" fill="rgba(210,210,210,0.45)"/><circle cx="815.4" cy="399.6" r="0.9" fill="rgba(210,210,210,0.34)"/><circle cx="854.5" cy="406.1" r="0.8" fill="rgba(210,210,210,0.32)"/><circle cx="882.5" cy="388.7" r="1.2" fill="rgba(210,210,210,0.35)"/><circle cx="24.8" cy="443.6" r="0.8" fill="rgba(210,210,210,0.36)"/><circle cx="67.5" cy="430.1" r="1.2" fill="rgba(210,210,210,0.54)"/><circle cx="118.8" cy="422.3" r="1.0" fill="rgba(210,210,210,0.46)"/><circle cx="145.1" cy="439.5" r="1.2" fill="rgba(210,210,210,0.61)"/><circle cx="201.0" cy="439.8" r="1.2" fill="rgba(210,210,210,0.36)"/><circle cx="243.7" cy="450.1" r="1.2" fill="rgba(210,210,210,0.40)"/><circle cx="276.6" cy="432.6" r="1.2" fill="rgba(210,210,210,0.41)"/><circle cx="323.2" cy="421.1" r="1.0" fill="rgba(210,210,210,0.43)"/><circle cx="355.3" cy="450.2" r="1.2" fill="rgba(210,210,210,0.40)"/><circle cx="386.6" cy="436.2" r="0.8" fill="rgba(210,210,210,0.54)"/><circle cx="448.9" cy="442.1" r="1.0" fill="rgba(210,210,210,0.59)"/><circle cx="485.7" cy="425.1" r="0.9" fill="rgba(210,210,210,0.58)"/><circle cx="522.4" cy="438.0" r="0.9" fill="rgba(210,210,210,0.54)"/><circle cx="563.4" cy="447.3" r="1.0" fill="rgba(210,210,210,0.53)"/><circle cx="610.0" cy="418.6" r="0.9" fill="rgba(210,210,210,0.43)"/><circle cx="628.2" cy="427.3" r="0.9" fill="rgba(210,210,210,0.56)"/><circle cx="673.1" cy="443.4" r="1.0" fill="rgba(210,210,210,0.61)"/><circle cx="725.3" cy="447.6" r="1.0" fill="rgba(210,210,210,0.59)"/><circle cx="779.2" cy="448.6" r="1.0" fill="rgba(210,210,210,0.64)"/><circle cx="815.0" cy="428.7" r="0.8" fill="rgba(210,210,210,0.34)"/><circle cx="836.2" cy="449.4" r="1.2" fill="rgba(210,210,210,0.60)"/><circle cx="904.8" cy="444.0" r="1.2" fill="rgba(210,210,210,0.43)"/><circle cx="6.6" cy="476.3" r="1.0" fill="rgba(210,210,210,0.46)"/><circle cx="66.7" cy="485.8" r="0.8" fill="rgba(210,210,210,0.63)"/><circle cx="111.0" cy="474.2" r="1.0" fill="rgba(210,210,210,0.52)"/><circle cx="160.2" cy="466.0" r="1.2" fill="rgba(210,210,210,0.32)"/><circle cx="201.2" cy="468.6" r="0.9" fill="rgba(210,210,210,0.44)"/><circle cx="214.0" cy="459.9" r="0.8" fill="rgba(210,210,210,0.65)"/><circle cx="257.0" cy="487.9" r="1.2" fill="rgba(210,210,210,0.35)"/><circle cx="307.3" cy="489.9" r="1.2" fill="rgba(210,210,210,0.54)"/><circle cx="355.7" cy="482.6" r="0.8" fill="rgba(210,210,210,0.61)"/><circle cx="405.1" cy="478.9" r="1.0" fill="rgba(210,210,210,0.63)"/><circle cx="419.9" cy="470.9" r="0.9" fill="rgba(210,210,210,0.46)"/><circle cx="488.4" cy="462.0" r="1.0" fill="rgba(210,210,210,0.54)"/><circle cx="503.4" cy="467.8" r="1.2" fill="rgba(210,210,210,0.64)"/><circle cx="545.7" cy="465.7" r="0.8" fill="rgba(210,210,210,0.52)"/><circle cx="585.6" cy="469.7" r="0.9" fill="rgba(210,210,210,0.65)"/><circle cx="627.5" cy="483.9" r="0.9" fill="rgba(210,210,210,0.37)"/><circle cx="693.3" cy="466.4" r="0.8" fill="rgba(210,210,210,0.57)"/><circle cx="716.9" cy="491.1" r="1.0" fill="rgba(210,210,210,0.65)"/><circle cx="775.4" cy="462.3" r="0.9" fill="rgba(210,210,210,0.60)"/><circle cx="790.8" cy="484.7" r="1.0" fill="rgba(210,210,210,0.38)"/><circle cx="832.1" cy="467.4" r="1.2" fill="rgba(210,210,210,0.34)"/><circle cx="890.2" cy="483.2" r="1.0" fill="rgba(210,210,210,0.47)"/><circle cx="23.1" cy="503.4" r="0.8" fill="rgba(210,210,210,0.48)"/><circle cx="71.4" cy="529.7" r="1.0" fill="rgba(210,210,210,0.53)"/><circle cx="103.8" cy="531.6" r="1.2" fill="rgba(210,210,210,0.32)"/><circle cx="157.9" cy="513.9" r="1.2" fill="rgba(210,210,210,0.34)"/><circle cx="173.6" cy="502.5" r="0.8" fill="rgba(210,210,210,0.51)"/><circle cx="216.7" cy="520.4" r="1.0" fill="rgba(210,210,210,0.50)"/><circle cx="266.3" cy="519.5" r="1.2" fill="rgba(210,210,210,0.40)"/><circle cx="298.3" cy="522.9" r="0.9" fill="rgba(210,210,210,0.60)"/><circle cx="350.5" cy="529.1" r="1.2" fill="rgba(210,210,210,0.44)"/><circle cx="390.7" cy="523.8" r="1.0" fill="rgba(210,210,210,0.41)"/><circle cx="440.8" cy="512.1" r="1.2" fill="rgba(210,210,210,0.35)"/><circle cx="462.3" cy="527.2" r="0.8" fill="rgba(210,210,210,0.33)"/><circle cx="526.0" cy="512.1" r="0.8" fill="rgba(210,210,210,0.35)"/><circle cx="562.0" cy="518.3" r="0.8" fill="rgba(210,210,210,0.42)"/><circle cx="597.5" cy="528.6" r="1.2" fill="rgba(210,210,210,0.63)"/><circle cx="653.9" cy="523.6" r="1.0" fill="rgba(210,210,210,0.64)"/><circle cx="678.1" cy="518.9" r="1.2" fill="rgba(210,210,210,0.37)"/><circle cx="715.2" cy="503.4" r="1.0" fill="rgba(210,210,210,0.60)"/><circle cx="752.8" cy="509.0" r="1.2" fill="rgba(210,210,210,0.38)"/><circle cx="818.2" cy="531.9" r="0.8" fill="rgba(210,210,210,0.59)"/><circle cx="851.7" cy="521.5" r="0.8" fill="rgba(210,210,210,0.54)"/><circle cx="878.8" cy="523.0" r="1.0" fill="rgba(210,210,210,0.41)"/><circle cx="17.7" cy="546.9" r="1.2" fill="rgba(210,210,210,0.35)"/><circle cx="49.7" cy="565.4" r="0.8" fill="rgba(210,210,210,0.64)"/><circle cx="113.3" cy="548.1" r="1.0" fill="rgba(210,210,210,0.45)"/><circle cx="135.1" cy="551.2" r="0.8" fill="rgba(210,210,210,0.41)"/><circle cx="200.4" cy="546.1" r="0.8" fill="rgba(210,210,210,0.56)"/><circle cx="234.7" cy="549.9" r="1.2" fill="rgba(210,210,210,0.53)"/><circle cx="273.8" cy="554.6" r="0.8" fill="rgba(210,210,210,0.38)"/><circle cx="306.4" cy="544.6" r="1.2" fill="rgba(210,210,210,0.54)"/><circle cx="353.7" cy="551.1" r="0.8" fill="rgba(210,210,210,0.38)"/><circle cx="377.8" cy="550.9" r="0.9" fill="rgba(210,210,210,0.37)"/><circle cx="444.1" cy="550.5" r="1.2" fill="rgba(210,210,210,0.34)"/><circle cx="484.8" cy="546.8" r="0.9" fill="rgba(210,210,210,0.43)"/><circle cx="517.9" cy="568.4" r="0.8" fill="rgba(210,210,210,0.58)"/><circle cx="555.8" cy="565.4" r="1.2" fill="rgba(210,210,210,0.45)"/><circle cx="614.4" cy="569.3" r="1.2" fill="rgba(210,210,210,0.50)"/><circle cx="648.6" cy="554.7" r="0.8" fill="rgba(210,210,210,0.34)"/><circle cx="698.4" cy="546.6" r="1.2" fill="rgba(210,210,210,0.63)"/><circle cx="735.2" cy="571.2" r="0.8" fill="rgba(210,210,210,0.33)"/><circle cx="757.1" cy="560.4" r="1.2" fill="rgba(210,210,210,0.48)"/><circle cx="819.1" cy="565.5" r="0.9" fill="rgba(210,210,210,0.38)"/><circle cx="834.1" cy="561.8" r="0.9" fill="rgba(210,210,210,0.49)"/><circle cx="902.8" cy="552.5" r="0.9" fill="rgba(210,210,210,0.55)"/></svg>
<div class="a" style="left:27px;top:126px;width:165px;height:25px;background:#a8a8a8"></div>
<div class="a" style="left:32px;top:132px;width:117px;height:19px;background:#cfcfcf"></div>
<div class="a" style="left:149px;top:132px;width:42px;height:19px;background:#fff"></div>
<svg class="a" style="left:45.0px;top:136.0px" width="12.0" height="11.0"><path d="M6.0 1.0V2.3M1.7 2.6H10.3M2.6 4.4H9.4V10.0H2.6ZM2.6 7.2H9.4M6.0 4.4V10.0" stroke="#3ad83a" stroke-width="1.3499999999999999" fill="none" stroke-linecap="square"/></svg>
<svg class="a" style="left:61.0px;top:136.0px" width="12.0" height="11.0"><path d="M1.7 2.8h2.2v5.4h-2.2zM5.0 1.4H10.3V10.0H5.0ZM5.0 5.7H10.3" stroke="#3a9ad8" stroke-width="1.3499999999999999" fill="none" stroke-linecap="square"/></svg>
<svg class="a" style="left:76.0px;top:136.0px" width="21.0" height="11.0"><path d="M1.7 3.7H4.1M3.0 1.0V10.0M1.7 7.8L4.1 6.0M4.8 3.2H9.8M6.3 1.0V10.0M8.6 1.0V10.0M4.8 7.3H9.8M11.2 2.3H19.3M13.6 1.0V3.7M16.9 1.0V3.7M15.2 4.2V10.0M13.2 5.5L11.6 8.6M17.3 5.5L18.9 8.6M12.8 4.2H17.7" stroke="#3ad83a" stroke-width="1.3499999999999999" fill="none" stroke-linecap="square"/></svg>
<svg class="a" style="left:134px;top:136px;" width="11" height="10" viewBox="0 0 11 10"><path d="M1 1 L10 9 M10 1 L1 9" stroke="#111" stroke-width="2.2"/><path d="M1 5 H10" stroke="#111" stroke-width="1"/></svg>
<svg class="a" style="left:151px;top:135px;" width="21" height="13" viewBox="0 0 21 13"><path d="M1.5 1.5 V11.5 M1.5 3 L7 10 V5" stroke="#111" stroke-width="1.8" fill="none"/><rect x="9" y="1.5" width="11" height="10" fill="none" stroke="#111" stroke-width="1.4"/></svg>
<svg class="a" style="left:179px;top:137px;" width="9" height="9" viewBox="0 0 9 9"><path d="M0.5 0.5 L8.5 8.5 M8.5 0.5 L0.5 8.5" stroke="#111" stroke-width="1.4"/></svg>
<svg class="a" style="left:0px;top:0px;" width="1152" height="864" viewBox="0 0 1152 864"><line x1="252" y1="237" x2="484" y2="418" stroke="#e4e4e4" stroke-width="2.2" stroke-linecap="butt" stroke-dasharray="8 6"/><line x1="717.5" y1="237.5" x2="497" y2="418" stroke="#e4e4e4" stroke-width="2.2" stroke-linecap="butt" stroke-dasharray="8 6"/><line x1="254.5" y1="595" x2="478" y2="418" stroke="#e4e4e4" stroke-width="2.2" stroke-linecap="butt" stroke-dasharray="8 6"/><line x1="718" y1="595.3" x2="490.5" y2="418" stroke="#e4e4e4" stroke-width="2.2" stroke-linecap="butt" stroke-dasharray="8 6"/><line x1="485.5" y1="245" x2="485.5" y2="586" stroke="#e4e4e4" stroke-width="2.3" stroke-linecap="butt" stroke-dasharray="7.5 5.9"/><line x1="265" y1="419.2" x2="708" y2="419.2" stroke="#e4e4e4" stroke-width="2.4" stroke-linecap="butt" stroke-dasharray="9 6"/><line x1="248.7" y1="232.3" x2="248.7" y2="599.5" stroke="#2ef02e" stroke-width="3.2" stroke-linecap="butt"/><line x1="247.1" y1="233.8" x2="723.8" y2="233.8" stroke="#2ef02e" stroke-width="3.2" stroke-linecap="butt"/><line x1="722.2" y1="233.8" x2="722.2" y2="598" stroke="#bdbdbd" stroke-width="2.6" stroke-linecap="butt"/><line x1="722.2" y1="232.3" x2="722.2" y2="249" stroke="#2ef02e" stroke-width="3.2" stroke-linecap="butt"/><line x1="722.2" y1="410" x2="722.2" y2="431" stroke="#2ef02e" stroke-width="3.2" stroke-linecap="butt"/><line x1="722.2" y1="584" x2="722.2" y2="599.5" stroke="#2ef02e" stroke-width="3.2" stroke-linecap="butt"/><line x1="247.1" y1="598.1" x2="723.8" y2="598.1" stroke="#bdbdbd" stroke-width="2.8" stroke-linecap="butt"/><line x1="247.1" y1="598.1" x2="265" y2="598.1" stroke="#2ef02e" stroke-width="3.2" stroke-linecap="butt"/><line x1="473" y1="598.1" x2="723.8" y2="598.1" stroke="#2ef02e" stroke-width="3.2" stroke-linecap="butt"/><line x1="498" y1="233.8" x2="524" y2="233.8" stroke="#d8d8d8" stroke-width="2.6" stroke-linecap="butt"/><line x1="524" y1="233.8" x2="534" y2="233.8" stroke="#a8e8a0" stroke-width="2.6" stroke-linecap="butt"/><line x1="264.3" y1="228" x2="264.3" y2="239" stroke="#2ef02e" stroke-width="2.4" stroke-linecap="butt"/><line x1="243" y1="248.6" x2="254.7" y2="248.6" stroke="#2ef02e" stroke-width="2.4" stroke-linecap="butt"/><line x1="707" y1="228" x2="707" y2="239" stroke="#2ef02e" stroke-width="2.4" stroke-linecap="butt"/><line x1="716.5" y1="248.6" x2="728.5" y2="248.6" stroke="#2ef02e" stroke-width="2.4" stroke-linecap="butt"/><line x1="243" y1="583.8" x2="254.7" y2="583.8" stroke="#2ef02e" stroke-width="2.4" stroke-linecap="butt"/><line x1="264.4" y1="593.5" x2="264.4" y2="603.7" stroke="#2ef02e" stroke-width="2.4" stroke-linecap="butt"/><line x1="716.5" y1="583.8" x2="728.5" y2="583.8" stroke="#2ef02e" stroke-width="2.4" stroke-linecap="butt"/><line x1="707.2" y1="593.5" x2="707.2" y2="603.7" stroke="#2ef02e" stroke-width="2.4" stroke-linecap="butt"/><line x1="473.5" y1="593" x2="473.5" y2="598" stroke="#2ef02e" stroke-width="2.4" stroke-linecap="butt"/><path d="M477 246.6 L485.7 236 L494.6 246.6" stroke="#e4e4e4" stroke-width="2.2" fill="none"/><path d="M480 242 L485.7 236 L491 242" stroke="#2ef02e" stroke-width="2.2" fill="none"/><path d="M476.8 585 L485.5 597 L495.3 585" stroke="#2ef02e" stroke-width="2.2" fill="none"/><path d="M264.8 411 L252 419.2 L264.8 427.9" stroke="#e4e4e4" stroke-width="2.2" fill="none"/><path d="M707.6 411 Q716 414 721 419.2 Q714 424 707.6 428.4" stroke="#e4e4e4" stroke-width="2.2" fill="none"/></svg>
<div class="a tx" style="left:457.5px;top:210.18px;font-size:22.92px;line-height:22.92px;color:#2ef02e;font-family:'Liberation Sans',sans-serif;transform:scaleX(0.89);transform-origin:0 0">10248A</div>
<div class="a tx" style="left:461.5px;top:601.34px;font-size:22.73px;line-height:22.73px;color:#2ef02e;font-family:'Liberation Mono',monospace;letter-spacing:1px">301</div>
<div class="a tx" style="left:236.2px;top:423.8px;font-size:21px;line-height:21px;color:#2ef02e;font-family:'Liberation Sans',sans-serif;transform:translate(-50%,-50%) rotate(-90deg) scaleX(0.96);transform-origin:center;">002UH</div>
<div class="a tx" style="left:735.7px;top:430.7px;font-size:22px;line-height:22px;color:#2ef02e;font-family:'Liberation Sans',sans-serif;transform:translate(-50%,-50%) rotate(90deg);transform-origin:center;letter-spacing:2px">61</div>
<div class="a" style="left:383px;top:350px;width:304px;height:130px;background:#fff;box-shadow:0 0 0 1px #2a2a2a"></div>
<div class="a" style="left:383px;top:350px;width:304px;height:35px;background:#0068d2"></div>
<div class="a" style="left:391px;top:359px;width:17px;height:16px;background:#fff"></div>
<svg class="a" style="left:391px;top:359px;" width="17" height="16" viewBox="0 0 17 16"><path d="M3 13 L7 8 L12 3" stroke="#111" stroke-width="2" fill="none"/><path d="M3 9 L6 13" stroke="#111" stroke-width="1.6"/><path d="M12 3 L14 5" stroke="#111" stroke-width="1.2"/></svg>
<div class="a tx" style="left:414px;top:359.35px;font-size:16.81px;line-height:16.81px;color:#d8f0ff;font-family:'Liberation Sans',sans-serif;">3</div>
<svg class="a" style="left:423.0px;top:360.7px" width="31.0" height="13.6"><path d="M5.5 1.0L2.0 6.2M4.3 3.9V12.6M8.0 1.6H14.5V12.6H8.0ZM8.0 7.0H14.5M16.5 4.5H21.5M19.3 1.0V12.6M16.5 9.7L21.5 7.4M22.5 1.6H29.0V12.6H22.5ZM22.5 7.0H29.0" stroke="#d8f0ff" stroke-width="1.74" fill="none" stroke-linecap="square"/></svg>
<svg class="a" style="left:663px;top:361px;" width="13" height="12" viewBox="0 0 13 12"><path d="M1 1 L12 11 M12 1 L1 11" stroke="#fff" stroke-width="2"/></svg>
<div class="a" style="left:397px;top:396px;width:19px;height:18px;border:1.5px solid #222;background:#fff"></div>
<div class="a tx" style="left:428px;top:395.72px;font-size:17.57px;line-height:17.57px;color:#111;font-family:'Liberation Sans',sans-serif;font-weight:normal;letter-spacing:0.0px;transform:scaleX(0.981);transform-origin:0 0;-webkit-text-stroke:0.3px #111">Reposed</div>
<svg class="a" style="left:397px;top:421px;" width="19" height="19" viewBox="0 0 19 19"><rect x="0.75" y="0.75" width="17.5" height="17.5" fill="#fff" stroke="#4a8ad8" stroke-width="1.5"/><path d="M11 17 L13 4 L16 3 L16 17 Z" fill="#2a9ae8"/></svg>
<svg class="a" style="left:427.0px;top:424.0px" width="52.0" height="14.0"><path d="M1.9 4.6H5.1M3.6 1.0V13.0M1.9 10.0L5.1 7.6M6.0 2.8H12.6M9.3 2.8L6.0 13.0M9.3 2.8L12.6 13.0M7.3 7.6H12.0M15.4 4.6V1.0H24.1V4.6M15.4 5.8H24.1M16.0 9.2H23.5M14.4 12.5H25.1M19.8 5.8V12.5M32.2 1.0V2.8M26.9 3.2H37.6M27.9 5.6H36.5V13.0H27.9ZM27.9 9.3H36.5M32.2 5.6V13.0M40.5 4.6V1.0H49.0V4.6M40.5 5.6H49.0V13.0H40.5ZM40.5 9.3H49.0M44.8 5.6V13.0" stroke="#111" stroke-width="1.7999999999999998" fill="none" stroke-linecap="square"/></svg>
<div class="a tx" style="left:482px;top:422.77px;font-size:17.14px;line-height:17.14px;color:#111;font-family:'Liberation Sans',sans-serif;font-weight:normal;letter-spacing:0.0px;transform:scaleX(0.944);transform-origin:0 0;-webkit-text-stroke:0.3px #111">557</div>
<svg class="a" style="left:397px;top:450px;" width="19" height="15" viewBox="0 0 19 15"><rect x="0" y="0" width="19" height="7" fill="#e81818"/><rect x="0" y="7" width="19" height="3" fill="#f0f0f0"/><rect x="0" y="10" width="19" height="5" fill="#2040c0"/><path d="M2 8 Q8 5 16 7 L16 9 H2 Z" fill="#fff"/></svg>
<svg class="a" style="left:427.0px;top:451.0px" width="16.0" height="13.5"><path d="M2.0 2.7H14.0M5.6 1.0V4.4M10.4 1.0V4.4M3.2 5.6H12.8M3.8 8.8H12.2M2.0 12.0H14.0M8.0 5.6V12.0" stroke="#111" stroke-width="1.7249999999999999" fill="none" stroke-linecap="square"/></svg>
<div class="a tx" style="left:443px;top:449.86px;font-size:16.43px;line-height:16.43px;color:#111;font-family:'Liberation Sans',sans-serif;font-weight:normal;letter-spacing:0.0px;transform:scaleX(0.929);transform-origin:0 0;-webkit-text-stroke:0.3px #111">lsen</div>
<div class="a tx" style="left:480px;top:449.86px;font-size:16.43px;line-height:16.43px;color:#111;font-family:'Liberation Sans',sans-serif;font-weight:normal;letter-spacing:0.0px;transform:scaleX(1.094);transform-origin:0 0;-webkit-text-stroke:0.3px #111">146</div>
<svg class="a" style="left:651px;top:454px;" width="13" height="8" viewBox="0 0 13 8"><path d="M1 1 L6.5 6.5 L12 1" stroke="#9a9a9a" stroke-width="2.4" fill="none"/></svg>
<div class="a" style="left:940px;top:126px;width:20px;height:601px;background:#fbfbfb"></div>
<div class="a" style="left:940px;top:148px;width:20px;height:1px;background:#9a9a9a"></div>
<svg class="a" style="left:943px;top:133px;" width="14" height="11" viewBox="0 0 14 11"><path d="M1.5 6 Q7 0 12.5 6" stroke="#111" stroke-width="1.8" fill="none"/><path d="M7 3 V10.5" stroke="#111" stroke-width="2"/></svg>
<svg class="a" style="left:946px;top:152px;" width="7" height="7" viewBox="0 0 7 7"><path d="M1 1.5 H6 M5 1.5 V6 M1 6 H6" stroke="#b0b0b0" stroke-width="1.2" fill="none"/></svg>
<div class="a" style="left:942px;top:159px;width:16px;height:446px;background:linear-gradient(90deg,#e4e4e4,#cbcbcb);border:1px solid #9c9c9c;border-radius:2px"></div>
<div class="a" style="left:940px;top:686px;width:20px;height:1px;background:#9a9a9a"></div>
<svg class="a" style="left:944px;top:689px;" width="12" height="14" viewBox="0 0 12 14"><path d="M2 7 H10" stroke="#111" stroke-width="1.6"/><circle cx="6" cy="3" r="1.6" fill="#111"/><rect x="3" y="9" width="6" height="4" fill="none" stroke="#111" stroke-width="1.3"/></svg>
<div class="a" style="left:940px;top:706px;width:20px;height:1px;background:#9a9a9a"></div>
<svg class="a" style="left:943px;top:710px;" width="14" height="13" viewBox="0 0 14 13"><path d="M4 6.5 H13" stroke="#111" stroke-width="1.8"/><path d="M10 2 Q13 6.5 10 11" stroke="#111" stroke-width="1.6" fill="none"/><circle cx="3" cy="6.5" r="2" fill="#111"/></svg>
<div class="a" style="left:960px;top:126px;width:2px;height:714px;background:#828282"></div>
<div class="a" style="left:962px;top:126px;width:2px;height:714px;background:#bebebe"></div>
<div class="a" style="left:964px;top:126px;width:2px;height:714px;background:#7e7e7e"></div>
<div class="a" style="left:28px;top:706px;width:912px;height:21px;background:#fbfbfb"></div>
<div class="a" style="left:49px;top:706px;width:1px;height:21px;background:#c8c8c8"></div>
<svg class="a" style="left:33px;top:710px;" width="13" height="11" viewBox="0 0 13 11"><path d="M11 2.5 Q7 0 5 2 L1 5.5 L5 9 Q8 10 11 7.5" stroke="#111" stroke-width="1.6" fill="none"/><circle cx="9.5" cy="5.5" r="1.8" fill="#111"/></svg>
<div class="a" style="left:55px;top:709px;width:638px;height:16px;background:linear-gradient(180deg,#dedede,#cccccc);border:1px solid #9c9c9c;border-radius:2px"></div>
<div class="a" style="left:67px;top:710px;width:1px;height:14px;background:#a0a0a0"></div>
<div class="a" style="left:919px;top:707px;width:16px;height:17px;border-left:1px solid #ddd;border-right:1px solid #ddd;background:#fbfbfb"></div>
<svg class="a" style="left:921px;top:711px;" width="12" height="9" viewBox="0 0 12 9"><path d="M1 2 V7 M5 1 V8 M8 2 V7 M11 2 V7" stroke="#222" stroke-width="1.4"/></svg>
<div class="a" style="left:28px;top:727px;width:932px;height:2px;background:#8e8e8e"></div>
<div class="a" style="left:28px;top:729px;width:932px;height:4px;background:#c8c8c8"></div>
<div class="a" style="left:27px;top:733px;width:933px;height:2px;background:#9a9a9a"></div>
<div class="a" style="left:966px;top:126px;width:186px;height:714px;background:#b9b9b9"></div>
<div class="a" style="left:966px;top:126px;width:1px;height:714px;background:#c6c6c6"></div>
<div class="a" style="left:966px;top:125px;width:186px;height:3px;background:#7a7a7a"></div>
<div class="a" style="left:967px;top:128px;width:185px;height:1px;background:#c6c6c6"></div>
<svg class="a" style="left:978.0px;top:136.0px" width="43.0" height="13.5"><path d="M2.5 2.2L4.8 3.9M2.0 6.2L4.4 7.3M2.0 12.5L4.8 9.0M7.0 1.6H13.7V12.5H7.0ZM7.0 7.0H13.7M21.5 1.0V2.7M15.6 3.1H27.4M16.8 5.4H26.2V12.5H16.8ZM16.8 8.9H26.2M21.5 5.4V12.5M29.3 2.7H41.0M32.8 1.0V4.4M37.5 1.0V4.4M30.5 5.4H39.9V12.5H30.5ZM30.5 8.9H39.9M35.2 5.4V12.5" stroke="#111" stroke-width="1.7249999999999999" fill="none" stroke-linecap="square"/></svg>
<svg class="a" style="left:1107px;top:137px;" width="13" height="12" viewBox="0 0 13 12"><path d="M1 1 L12 11 M12 1 L1 11" stroke="#555" stroke-width="1.6"/></svg>
<svg class="a" style="left:1132px;top:136px;" width="14" height="15" viewBox="0 0 14 15"><path d="M3 2.5 Q11 0 11.5 7 Q12 13.5 4 13 M6 6 Q9 7 7.5 11" stroke="#7a7a7a" stroke-width="1.8" fill="none"/></svg>
<svg class="a" style="left:980px;top:162px;" width="20" height="17" viewBox="0 0 20 17"><path d="M10 16 L2 8 Q-1 4 3 1.5 Q7 0 10 4 Q13 0 17 1.5 Q21 4 18 8 Z" fill="#f7aa00" stroke="#dc9000" stroke-width="1"/></svg>
<svg class="a" style="left:1008.0px;top:165.0px" width="57.0" height="13.5"><path d="M2.0 4.4H6.7M4.6 1.0V12.5M2.0 9.6L6.7 7.3M7.6 1.6H13.8V12.5H7.6ZM7.6 7.0H13.8M15.7 2.7H27.5M19.3 1.0V4.4M24.0 1.0V4.4M16.9 5.6H26.4M17.5 8.8H25.8M15.7 12.0H27.5M21.6 5.6V12.0M35.4 1.0V2.7M29.5 3.1H41.3M35.4 5.0V12.5M32.4 6.8L30.1 10.8M38.3 6.8L40.7 10.8M31.8 5.0H38.9M44.4 4.4V1.0H53.9V4.4M44.4 5.6H53.9M45.0 8.8H53.3M43.2 12.0H55.0M49.1 5.6V12.0" stroke="#111" stroke-width="1.7249999999999999" fill="none" stroke-linecap="square"/></svg>
<div class="a" style="left:1124px;top:166px;width:13px;height:12px;border:1.3px solid #666;background:#d8d8d8"></div><div class="a" style="left:1129px;top:171px;width:3px;height:2px;background:#555"></div>
<svg class="a" style="left:980px;top:191px;" width="20" height="16" viewBox="0 0 20 16"><path d="M1 2 Q4 0 6 2 Q10 4 14 2 Q17 0 19 2 Q17 8 19 14 Q15 16 10 14 Q5 16 1 14 Q3 8 1 2 Z" fill="#f6a000" stroke="#e08a00" stroke-width="1"/><path d="M6 6 Q10 9 14 6" stroke="#f8c040" stroke-width="1.2" fill="none"/></svg>
<svg class="a" style="left:1008.0px;top:193.0px" width="29.0" height="13.5"><path d="M1.9 2.7H13.6M5.4 1.0V4.4M10.1 1.0V4.4M7.8 5.0V12.5M4.8 6.8L2.5 10.8M10.7 6.8L13.0 10.8M4.3 5.0H11.2M21.2 1.0V2.7M15.4 3.1H27.1M21.2 5.0V12.5M18.3 6.8L16.0 10.8M24.2 6.8L26.5 10.8M17.8 5.0H24.7" stroke="#111" stroke-width="1.7249999999999999" fill="none" stroke-linecap="square"/></svg>
<div class="a" style="left:1124px;top:194px;width:13px;height:12px;border:1.3px solid #666;background:#d8d8d8"></div><div class="a" style="left:1129px;top:199px;width:3px;height:2px;background:#555"></div>
<svg class="a" style="left:980px;top:219px;" width="20" height="17" viewBox="0 0 20 17"><path d="M10 16 L2 8 Q-1 4 3 1.5 Q7 0 10 4 Q13 0 17 1.5 Q21 4 18 8 Z" fill="#e80c0c"/></svg>
<svg class="a" style="left:1008.0px;top:221.0px" width="56.0" height="13.5"><path d="M1.9 2.7H13.6M5.4 1.0V4.4M10.1 1.0V4.4M7.8 5.0V12.5M4.8 6.8L2.5 10.8M10.7 6.8L13.0 10.8M4.3 5.0H11.2M21.2 1.0V2.7M15.4 3.1H27.1M16.6 5.6H25.9M17.2 8.8H25.3M15.4 12.0H27.1M21.2 5.6V12.0M30.1 4.4V1.0H39.4V4.4M30.1 5.4H39.4V12.5H30.1ZM30.1 8.9H39.4M34.8 5.4V12.5M42.4 2.7H54.1M45.9 1.0V4.4M50.6 1.0V4.4M42.4 6.2H54.1M48.2 4.4L43.0 12.5M48.2 6.8L53.5 12.5" stroke="#111" stroke-width="1.7249999999999999" fill="none" stroke-linecap="square"/></svg>
<div class="a" style="left:1124px;top:222px;width:13px;height:12px;border:1.3px solid #666;background:#d8d8d8"></div><div class="a" style="left:1129px;top:227px;width:3px;height:2px;background:#555"></div>
<svg class="a" style="left:981px;top:248px;" width="18" height="16" viewBox="0 0 18 16"><ellipse cx="9" cy="8.5" rx="8.5" ry="7.5" fill="#5a90e0"/><path d="M2 7 Q3 0 11 1 Q13 4 9 9 Z" fill="#f6a000"/><path d="M4 10 Q9 13 15 9" stroke="#ddd" stroke-width="1.2" fill="none"/></svg>
<div class="a" style="left:1009px;top:245px;width:129px;height:25px;background:#d2d2d2;border:1.5px solid #8a8a8a"></div>
<svg class="a" style="left:1012.0px;top:250.0px" width="25.0" height="13.5"><path d="M1.8 2.7H11.7M4.8 1.0V4.4M8.7 1.0V4.4M6.8 5.0V12.5M4.3 6.8L2.3 10.8M9.2 6.8L11.2 10.8M3.8 5.0H9.7M18.2 1.0V2.7M13.3 3.1H23.2M18.2 5.0V12.5M15.8 6.8L13.8 10.8M20.7 6.8L22.7 10.8M15.3 5.0H21.2" stroke="#111" stroke-width="1.7249999999999999" fill="none" stroke-linecap="square"/></svg>
<svg class="a" style="left:1126px;top:252px;" width="9" height="11" viewBox="0 0 9 11"><path d="M1.5 1 L7.5 5.5 L1.5 10" stroke="#555" stroke-width="1.8" fill="none"/></svg>
<svg class="a" style="left:980px;top:276px;" width="20" height="16" viewBox="0 0 20 16"><path d="M1 7 Q1 5 4 5 H18 Q19 5 19 7 V13 Q19 15 16 15 H4 Q1 15 1 13 Z" fill="#d01c24"/><path d="M7 6 L9 0.5 Q11 0 11 2 L10.5 6 Z" fill="#e83030"/><path d="M2 12.5 Q10 15.5 18 12.5 V14 Q10 17 2 14 Z" fill="#3a3a6a"/><path d="M8 6 V12" stroke="#f08080" stroke-width="1"/></svg>
<svg class="a" style="left:1008.0px;top:278.0px" width="27.0" height="13.5"><path d="M1.9 4.4H5.1M3.6 1.0V12.5M1.9 9.6L5.1 7.3M6.0 3.9H12.6M8.0 1.0V12.5M11.0 1.0V12.5M6.0 9.0H12.6M15.4 4.4V1.0H24.1V4.4M14.4 6.2H25.1M19.8 4.4L14.9 12.5M19.8 6.8L24.6 12.5" stroke="#111" stroke-width="1.7249999999999999" fill="none" stroke-linecap="square"/></svg>
<div class="a" style="left:1124px;top:279px;width:13px;height:12px;border:1.3px solid #666;background:#d8d8d8"></div><div class="a" style="left:1129px;top:284px;width:3px;height:2px;background:#555"></div>
<div class="a" style="left:966px;top:305px;width:186px;height:2px;background:#858585"></div>
<div class="a" style="left:966px;top:307px;width:186px;height:1px;background:#c8c8c8"></div>
<svg class="a" style="left:979.0px;top:317.0px" width="43.0" height="13.0"><path d="M3.1 4.3V1.0H12.5V4.3M3.1 5.2H12.5V12.0H3.1ZM3.1 8.6H12.5M7.8 5.2V12.0M16.2 2.1L18.9 3.8M15.6 6.0L18.4 7.1M15.6 12.0L18.9 8.7M21.3 2.6H27.4M24.3 2.6L21.3 12.0M24.3 2.6L27.4 12.0M22.5 7.1H26.8M29.3 2.6H41.0M32.8 1.0V4.3M37.5 1.0V4.3M30.5 5.4H39.9M31.1 8.5H39.3M29.3 11.6H41.0M35.2 5.4V11.6" stroke="#111" stroke-width="1.65" fill="none" stroke-linecap="square"/></svg>
<div class="a" style="left:1134px;top:318px;width:10px;height:2px;background:#444"></div>
<svg class="a" style="left:980px;top:344px;" width="18" height="15" viewBox="0 0 18 15"><rect x="0.5" y="0.5" width="17" height="14" fill="#64a0e8" stroke="#1a4a9a" stroke-width="1"/><path d="M0 7 H18 M9 0 V15" stroke="#1a4a9a" stroke-width="1.2"/></svg>
<svg class="a" style="left:1008.0px;top:345.6px" width="52.0" height="12.8"><path d="M4.9 1.0L1.9 5.9M3.8 3.7V11.8M7.0 1.5H12.6V11.8H7.0ZM7.0 6.6H12.6M19.8 1.0V2.6M14.4 2.9H25.1M15.4 5.3H24.1M16.0 8.3H23.5M14.4 11.4H25.1M19.8 5.3V11.4M32.2 1.0V2.6M26.9 2.9H37.6M32.2 4.8V11.8M29.6 6.4L27.4 10.2M34.9 6.4L37.1 10.2M29.0 4.8H35.5M39.4 4.2H43.7M41.7 1.0V11.8M39.4 9.1L43.7 6.9M44.5 3.7H50.1M46.2 1.0V11.8M48.7 1.0V11.8M44.5 8.6H50.1" stroke="#111" stroke-width="1.62" fill="none" stroke-linecap="square"/></svg>
<svg class="a" style="left:980px;top:370px;" width="18" height="17" viewBox="0 0 18 17"><rect x="0.5" y="0.5" width="17" height="16" fill="#5a98e0" stroke="#1a2a4a" stroke-width="1"/><rect x="6" y="7" width="11.5" height="9.5" fill="#f58a1a"/><path d="M0 6.5 H18 M6 0 V17" stroke="#1a2a4a" stroke-width="1.3"/><rect x="0.5" y="7" width="5" height="9.5" fill="#2a3448"/><rect x="2" y="9" width="2" height="2" fill="#fff"/><rect x="2" y="13" width="2" height="2" fill="#fff"/></svg>
<svg class="a" style="left:1008.0px;top:372.0px" width="44.0" height="12.8"><path d="M2.0 2.6H14.0M5.6 1.0V4.2M10.4 1.0V4.2M2.0 5.9H14.0M8.0 4.2L2.6 11.8M8.0 6.4L13.4 11.8M16.0 3.2h3.6v6.5h-3.6zM21.2 3.7H28.0M23.2 1.0V11.8M26.3 1.0V11.8M21.2 8.6H28.0M36.0 1.0V2.6M30.0 2.9H42.0M36.0 4.8V11.8M33.0 6.4L30.6 10.2M39.0 6.4L41.4 10.2M32.4 4.8H39.6" stroke="#111" stroke-width="1.62" fill="none" stroke-linecap="square"/></svg>
<div class="a" style="left:1124px;top:372px;width:13px;height:12px;border:1.3px solid #666;background:#d8d8d8"></div><div class="a" style="left:1129px;top:377px;width:3px;height:2px;background:#555"></div>
<svg class="a" style="left:980px;top:398px;" width="18" height="17" viewBox="0 0 18 17"><rect x="0" y="0" width="18" height="17" fill="#707070"/><rect x="0" y="4" width="18" height="1.5" fill="#aaa"/></svg>
<svg class="a" style="left:1008.0px;top:400.0px" width="30.0" height="12.8"><path d="M2.0 3.2h4.1v6.5h-4.1zM7.8 1.9H14.0M7.8 6.4H14.0M7.8 11.3H14.0M10.9 1.0V11.8M18.9 1.0L16.0 5.9M17.9 3.7V11.8M21.2 1.9H28.0M21.2 6.4H28.0M21.2 11.3H28.0M24.6 1.0V11.8" stroke="#111" stroke-width="1.62" fill="none" stroke-linecap="square"/></svg>
<div class="a" style="left:1124px;top:401px;width:13px;height:12px;border:1.3px solid #666;background:#d8d8d8"></div><div class="a" style="left:1129px;top:406px;width:3px;height:2px;background:#555"></div>
<svg class="a" style="left:979px;top:425px;" width="21" height="21" viewBox="0 0 21 21"><circle cx="10.5" cy="10.5" r="9" fill="#e4e4e4" stroke="#6a6a6a" stroke-width="1.8"/><path d="M10.5 3 V10.5 H6" stroke="#555" stroke-width="1.4" fill="none"/></svg>
<svg class="a" style="left:1008.0px;top:428.0px" width="57.0" height="12.8"><path d="M2.0 4.2H6.7M4.6 1.0V11.8M2.0 9.1L6.7 6.9M7.6 3.7H13.8M9.5 1.0V11.8M12.3 1.0V11.8M7.6 8.6H13.8M15.7 3.2h3.5v6.5h-3.5zM20.8 3.7H27.5M22.8 1.0V11.8M25.9 1.0V11.8M20.8 8.6H27.5M29.5 2.6H41.3M33.0 1.0V4.2M37.7 1.0V4.2M30.6 5.1H40.1V11.8H30.6ZM30.6 8.5H40.1M35.4 5.1V11.8M43.2 2.6H55.0M46.8 1.0V4.2M51.5 1.0V4.2M43.2 5.9H55.0M49.1 4.2L43.8 11.8M49.1 6.4L54.4 11.8" stroke="#111" stroke-width="1.62" fill="none" stroke-linecap="square"/></svg>
<div class="a" style="left:1076px;top:423px;width:62px;height:24px;background:#cdcdcd;border:1.5px solid #8e8e8e"></div>
<svg class="a" style="left:1126px;top:430px;" width="9" height="11" viewBox="0 0 9 11"><path d="M1.5 1 L7.5 5.5 L1.5 10" stroke="#555" stroke-width="1.8" fill="none"/></svg>
<div class="a" style="left:966px;top:456px;width:186px;height:2px;background:#858585"></div>
<div class="a" style="left:966px;top:458px;width:186px;height:1px;background:#c8c8c8"></div>
<svg class="a" style="left:979.0px;top:468.0px" width="42.0" height="13.0"><path d="M1.9 4.3H6.5M4.5 1.0V12.0M1.9 9.2L6.5 7.1M7.4 3.8H13.4M9.2 1.0V12.0M11.9 1.0V12.0M7.4 8.7H13.4M18.5 1.0L15.3 6.0M17.3 3.8V12.0M20.8 2.6H26.7M23.8 2.6L20.8 12.0M23.8 2.6L26.7 12.0M22.0 7.1H26.1M28.6 3.2h2.9v6.6h-2.9zM33.0 2.6H40.1M36.5 2.6L33.0 12.0M36.5 2.6L40.1 12.0M34.4 7.1H39.4" stroke="#111" stroke-width="1.65" fill="none" stroke-linecap="square"/></svg>
<svg class="a" style="left:1132px;top:466px;" width="12" height="15" viewBox="0 0 12 15"><path d="M11 1.5 L2 7.5 L11 13.5" stroke="#666" stroke-width="1.8" fill="none"/></svg>
<div class="a" style="left:981px;top:493px;width:103px;height:26px;background:#006ad6;border:1px solid #0a58b8"></div>
<svg class="a" style="left:1018.0px;top:498.0px" width="29.0" height="14.0"><path d="M1.9 2.8H13.6M5.4 1.0V4.6M10.1 1.0V4.6M3.1 5.6H12.4V13.0H3.1ZM3.1 9.3H12.4M7.8 5.6V13.0M15.4 2.8H27.1M18.9 1.0V4.6M23.6 1.0V4.6M21.2 5.2V13.0M18.3 7.0L16.0 11.2M24.2 7.0L26.5 11.2M17.8 5.2H24.7" stroke="#fff" stroke-width="1.7999999999999998" fill="none" stroke-linecap="square"/></svg>
<div class="a" style="left:27px;top:735px;width:933px;height:105px;background:#bbbbbb"></div>
<div class="a" style="left:27px;top:733px;width:2px;height:107px;background:#7a7a7a"></div>
<div class="a" style="left:29px;top:735px;width:1px;height:105px;background:#c8c8c8"></div>
<div class="a" style="left:31px;top:735px;width:1px;height:105px;background:#8a8a8a"></div>
<div class="a" style="left:32px;top:737px;width:8px;height:101px;background:#c2c2c2"></div>
<div class="a" style="left:31px;top:735px;width:929px;height:2px;background:#b4b4b4"></div>
<div class="a" style="left:436px;top:737px;width:2px;height:101px;background:#a8a8a8"></div>
<div class="a" style="left:943px;top:742px;width:9px;height:2px;background:#858585"></div>
<div class="a" style="left:40px;top:743px;width:388px;height:95px;background:#fff;border:1px solid #a8a8a8"></div>
<div class="a" style="left:41px;top:744px;width:386px;height:25px;background:#82b8fc"></div>
<div class="a" style="left:231px;top:744px;width:1px;height:94px;background:#b8b8b8"></div>
<div class="a" style="left:41px;top:787px;width:386px;height:1px;background:#b8b8b8"></div>
<div class="a" style="left:41px;top:806px;width:386px;height:1px;background:#b8b8b8"></div>
<div class="a" style="left:41px;top:825px;width:386px;height:1px;background:#b8b8b8"></div>
<svg class="a" style="left:44.0px;top:750.0px" width="16.0" height="12.0"><path d="M4.5 1.0V2.5M1.5 2.8H7.5M4.5 4.5V11.0M3.0 6.0L1.8 9.5M6.0 6.0L7.2 9.5M2.7 4.5H6.3M10.0 1.0L8.5 5.5M9.4 3.5V11.0M11.1 1.5H14.5V11.0H11.1ZM11.1 6.2H14.5" stroke="#0a2a6a" stroke-width="1.5" fill="none" stroke-linecap="square"/></svg>
<svg class="a" style="left:234.0px;top:750.0px" width="43.0" height="12.0"><path d="M5.2 1.0L2.0 5.5M4.1 3.5V11.0M7.6 3.5H13.7M9.4 1.0V11.0M12.2 1.0V11.0M7.6 8.0H13.7M15.6 2.5H27.4M19.1 1.0V4.0M23.9 1.0V4.0M16.8 5.0H26.2M17.4 7.8H25.6M15.6 10.6H27.4M21.5 5.0V10.6M32.6 1.0L29.3 5.5M31.4 3.5V11.0M34.9 1.5H41.0V11.0H34.9ZM34.9 6.2H41.0" stroke="#0a2a6a" stroke-width="1.5" fill="none" stroke-linecap="square"/></svg>
<svg class="a" style="left:408px;top:750px;" width="13" height="12" viewBox="0 0 13 12"><path d="M1 1 L12 11 M12 1 L1 11" stroke="#1a2a5a" stroke-width="2.4"/><path d="M2 6 H11" stroke="#1a2a5a" stroke-width="1.2"/></svg>
<svg class="a" style="left:45px;top:772px;" width="14" height="13" viewBox="0 0 14 13"><rect width="14" height="13" fill="#e81818"/><path d="M5 3 H9 V10 H5" stroke="#fff" stroke-width="1.5" fill="none"/></svg>
<div class="a tx" style="left:63px;top:772.11px;font-size:14.57px;line-height:14.57px;color:#111;font-family:'Liberation Sans',sans-serif;font-weight:normal;letter-spacing:0.0px;transform:scaleX(0.954);transform-origin:0 0;-webkit-text-stroke:0.35px #111">Reglort/v 08 - 5</div>
<div class="a tx" style="left:236px;top:772.11px;font-size:14.57px;line-height:14.57px;color:#111;font-family:'Liberation Sans',sans-serif;font-weight:normal;letter-spacing:0.0px;transform:scaleX(0.932);transform-origin:0 0;-webkit-text-stroke:0.3px #111">11.46</div>
<svg class="a" style="left:45px;top:792px;" width="14" height="11" viewBox="0 0 14 11"><rect width="14" height="11" fill="#e81818"/><path d="M4 9 L10 3" stroke="#fff" stroke-width="1.6"/></svg>
<div class="a tx" style="left:63px;top:790.61px;font-size:14.57px;line-height:14.57px;color:#111;font-family:'Liberation Sans',sans-serif;font-weight:normal;letter-spacing:0.0px;transform:scaleX(0.986);transform-origin:0 0;-webkit-text-stroke:0.35px #111">Rozfolvaci 0- 3</div>
<div class="a tx" style="left:236px;top:790.61px;font-size:14.57px;line-height:14.57px;color:#111;font-family:'Liberation Sans',sans-serif;font-weight:normal;letter-spacing:0.0px;transform:scaleX(0.932);transform-origin:0 0;-webkit-text-stroke:0.3px #111">12.33</div>
<div class="a" style="left:45px;top:810px;width:14px;height:12px;background:#1ee01e"></div>
<div class="a tx" style="left:63px;top:809.11px;font-size:14.57px;line-height:14.57px;color:#111;font-family:'Liberation Sans',sans-serif;font-weight:normal;letter-spacing:0.0px;transform:scaleX(0.870);transform-origin:0 0;-webkit-text-stroke:0.35px #111">Rasuoh0I - B</div>
<div class="a tx" style="left:236px;top:809.11px;font-size:14.57px;line-height:14.57px;color:#111;font-family:'Liberation Sans',sans-serif;font-weight:normal;letter-spacing:0.0px;transform:scaleX(0.932);transform-origin:0 0;-webkit-text-stroke:0.3px #111">14.15</div>
<div class="a" style="left:45px;top:829px;width:14px;height:9px;background:#f0440a"></div>
<div class="a tx" style="left:63px;top:828.11px;font-size:14.57px;line-height:14.57px;color:#111;font-family:'Liberation Sans',sans-serif;font-weight:normal;letter-spacing:0.0px;transform:scaleX(0.962);transform-origin:0 0;-webkit-text-stroke:0.35px #111">Bxial4x9S 9</div>
<div class="a tx" style="left:236px;top:828.11px;font-size:14.57px;line-height:14.57px;color:#111;font-family:'Liberation Sans',sans-serif;font-weight:normal;letter-spacing:0.0px;transform:scaleX(0.898);transform-origin:0 0;-webkit-text-stroke:0.3px #111">12.831</div>
<div class="a" style="left:40px;top:837px;width:388px;height:3px;background:#b0b0b0"></div>
<div class="a" style="left:0px;top:840px;width:1152px;height:24px;background:#bbbbbb"></div>
<div class="a" style="left:0px;top:839px;width:1152px;height:2px;background:#7a7a7a"></div>
<div class="a" style="left:0px;top:841px;width:1152px;height:1px;background:#c6c6c6"></div>
<svg class="a" style="left:5px;top:848px;" width="15" height="12" viewBox="0 0 15 12"><path d="M3 0 H12 L14 7 H1 Z" fill="#9a9a9a"/><rect x="0" y="7" width="15" height="5" fill="#6a6a6a"/></svg>
<svg class="a" style="left:28.0px;top:848.3px" width="54.0" height="12.4"><path d="M1.9 3.1h3.8v6.2h-3.8zM7.3 3.6H13.1M9.0 1.0V11.4M11.6 1.0V11.4M7.3 8.3H13.1M15.5 2.0L17.6 3.6M14.9 5.7L17.3 6.7M14.9 11.4L17.6 8.3M19.7 1.8H26.1M19.7 6.2H26.1M19.7 10.9H26.1M22.9 1.0V11.4M33.5 1.0V2.6M27.9 2.9H39.1M27.9 5.7H39.1M33.5 4.1L28.5 11.4M33.5 6.2L38.5 11.4M40.9 2.6H52.1M44.3 1.0V4.1M48.7 1.0V4.1M46.5 4.6V11.4M43.7 6.2L41.5 9.8M49.3 6.2L51.5 9.8M43.1 4.6H49.9" stroke="#111" stroke-width="1.56" fill="none" stroke-linecap="square"/></svg>
<div class="a" style="left:88px;top:845px;width:1px;height:17px;background:#999"></div>
<svg class="a" style="left:95.0px;top:848.3px" width="70.0" height="12.4"><path d="M7.8 1.0V2.6M2.0 2.9H13.6M3.1 5.2H12.5M3.7 8.1H11.9M2.0 11.0H13.6M7.8 5.2V11.0M21.4 1.0V2.6M15.6 2.9H27.2M21.4 4.6V11.4M18.5 6.2L16.1 9.8M24.3 6.2L26.7 9.8M17.9 4.6H24.9M29.2 2.6H40.8M32.7 1.0V4.1M37.3 1.0V4.1M29.2 5.7H40.8M35.0 4.1L29.7 11.4M35.0 6.2L40.3 11.4M46.0 1.0L42.8 5.7M44.9 3.6V11.4M48.4 3.6H54.4M50.2 1.0V11.4M52.9 1.0V11.4M48.4 8.3H54.4M56.4 4.1H60.4M58.6 1.0V11.4M56.4 8.8L60.4 6.7M61.4 3.6H68.0M63.4 1.0V11.4M66.4 1.0V11.4M61.4 8.3H68.0" stroke="#111" stroke-width="1.56" fill="none" stroke-linecap="square"/></svg>
<svg class="a" style="left:215.0px;top:848.3px" width="43.0" height="12.4"><path d="M2.5 2.0L4.8 3.6M2.0 5.7L4.4 6.7M2.0 11.4L4.8 8.3M7.0 1.5H13.7V11.4H7.0ZM7.0 6.4H13.7M16.8 4.1V1.0H26.2V4.1M16.8 5.2H26.2M17.4 8.1H25.6M15.6 11.0H27.4M21.5 5.2V11.0M29.3 3.1h3.0v6.2h-3.0zM33.8 2.6H41.0M37.4 2.6L33.8 11.4M37.4 2.6L41.0 11.4M35.2 6.7H40.3" stroke="#111" stroke-width="1.56" fill="none" stroke-linecap="square"/></svg>
<div class="a" style="left:265px;top:845px;width:1px;height:17px;background:#999"></div>
<svg class="a" style="left:272.0px;top:848.3px" width="87.0" height="12.4"><path d="M5.0 1.0L2.0 5.7M3.9 3.6V11.4M7.2 1.5H14.2V11.4H7.2ZM7.2 6.4H14.2M16.2 4.1H19.8M18.2 1.0V11.4M16.2 8.8L19.8 6.7M20.8 1.5H28.3V11.4H20.8ZM20.8 6.4H28.3M32.9 1.0L30.3 5.7M32.0 3.6V11.4M35.0 2.6H42.5M38.7 2.6L35.0 11.4M38.7 2.6L42.5 11.4M36.5 6.7H41.8M44.5 4.1H48.8M46.8 1.0V11.4M44.5 8.8L48.8 6.7M49.7 2.6H56.7M53.2 2.6L49.7 11.4M53.2 2.6L56.7 11.4M51.1 6.7H56.0M59.9 4.1V1.0H69.6V4.1M58.7 5.7H70.8M64.8 4.1L59.3 11.4M64.8 6.2L70.2 11.4M72.8 2.6H85.0M76.5 1.0V4.1M81.4 1.0V4.1M74.0 5.0H83.8V11.4H74.0ZM74.0 8.2H83.8M78.9 5.0V11.4" stroke="#111" stroke-width="1.56" fill="none" stroke-linecap="square"/></svg>
<svg class="a" style="left:403.0px;top:848.3px" width="41.0" height="12.4"><path d="M1.7 2.6H10.1M4.2 1.0V4.1M7.6 1.0V4.1M5.9 4.6V11.4M3.8 6.2L2.1 9.8M8.0 6.2L9.6 9.8M3.4 4.6H8.4M11.9 2.0L13.8 3.6M11.4 5.7L13.4 6.7M11.4 11.4L13.8 8.3M15.5 1.5H19.8V11.4H15.5ZM15.5 6.4H19.8M21.6 2.0L23.5 3.6M21.2 5.7L23.2 6.7M21.2 11.4L23.5 8.3M25.2 1.5H29.6V11.4H25.2ZM25.2 6.4H29.6M31.8 4.1V1.0H38.5V4.1M31.8 5.2H38.5M32.2 8.1H38.1M30.9 11.0H39.3M35.1 5.2V11.0" stroke="#111" stroke-width="1.56" fill="none" stroke-linecap="square"/></svg>
<div class="a" style="left:453px;top:845px;width:1px;height:17px;background:#999"></div>
<svg class="a" style="left:461.0px;top:848.3px" width="28.0" height="12.4"><path d="M5.0 1.0L1.9 5.7M3.9 3.6V11.4M7.3 3.6H13.1M9.0 1.0V11.4M11.6 1.0V11.4M7.3 8.3H13.1M14.9 2.6H26.1M18.3 1.0V4.1M22.7 1.0V4.1M14.9 5.7H26.1M20.5 4.1L15.5 11.4M20.5 6.2L25.5 11.4" stroke="#111" stroke-width="1.56" fill="none" stroke-linecap="square"/></svg>
<svg class="a" style="left:495.0px;top:848.3px" width="54.0" height="12.4"><path d="M1.9 2.6H13.1M5.3 1.0V4.1M9.7 1.0V4.1M3.0 5.2H12.0M3.6 8.1H11.4M1.9 11.0H13.1M7.5 5.2V11.0M14.9 2.6H26.1M18.3 1.0V4.1M22.7 1.0V4.1M16.0 5.2H25.0M16.6 8.1H24.4M14.9 11.0H26.1M20.5 5.2V11.0M33.5 1.0V2.6M27.9 2.9H39.1M29.0 5.0H38.0V11.4H29.0ZM29.0 8.2H38.0M33.5 5.0V11.4M42.0 4.1V1.0H51.0V4.1M42.0 5.0H51.0V11.4H42.0ZM42.0 8.2H51.0M46.5 5.0V11.4" stroke="#111" stroke-width="1.56" fill="none" stroke-linecap="square"/></svg>
<svg class="a" style="left:913px;top:849px;" width="13" height="12" viewBox="0 0 13 12"><path d="M1 1 L12 4 M1 6 H12 M1 10 H12 M4 1 L8 12" stroke="#111" stroke-width="1.5" fill="none"/></svg>
<svg class="a" style="left:935px;top:848px;" width="17" height="14" viewBox="0 0 17 14"><circle cx="8.5" cy="7" r="6.5" fill="none" stroke="#999" stroke-width="1.4"/><path d="M8 3 V8 L10 10" stroke="#999" stroke-width="1.2" fill="none"/></svg>
<svg class="a" style="left:959px;top:848px;" width="18" height="14" viewBox="0 0 18 14"><path d="M9 13 L2 7 Q-1 3 3 1.5 Q7 0 9 4 Q11 0 15 1.5 Q19 3 16 7 Z" fill="none" stroke="#999" stroke-width="1.4"/></svg>
<svg class="a" style="left:986px;top:850px;" width="15" height="11" viewBox="0 0 15 11"><path d="M7 0 L9 5 L15 6 L9 8 L7 11 L6 8 L0 6 L6 5 Z" fill="#e8a020"/></svg>
<div class="a" style="left:1007px;top:844px;width:2px;height:20px;background:#a0a0a0"></div>
<div class="a" style="left:1016px;top:844px;width:136px;height:20px;background:#ebebeb;border:1px solid #a0a0a0"></div>
<svg class="a" style="left:1019px;top:847px;" width="18" height="14" viewBox="0 0 18 14"><rect width="18" height="14" rx="2" fill="#22b8e8"/><rect x="4" y="1" width="13" height="12" rx="2" fill="#18d838"/><path d="M8 9 L13 4" stroke="#fff" stroke-width="2"/></svg>
<svg class="a" style="left:1038.0px;top:847.0px" width="30.0" height="13.0"><path d="M3.3 1.0L1.7 6.0M2.7 3.8V12.0M4.7 3.8H9.7M6.2 1.0V12.0M8.4 1.0V12.0M4.7 8.7H9.7M11.8 4.3V1.0H18.2V4.3M11.8 5.4H18.2M12.2 8.5H17.8M11.0 11.6H19.0M15.0 5.4V11.6M20.3 2.6H28.3M22.7 1.0V4.3M25.9 1.0V4.3M21.1 5.4H27.5M21.5 8.5H27.1M20.3 11.6H28.3M24.3 5.4V11.6" stroke="#111" stroke-width="1.65" fill="none" stroke-linecap="square"/></svg>
</body></html>
